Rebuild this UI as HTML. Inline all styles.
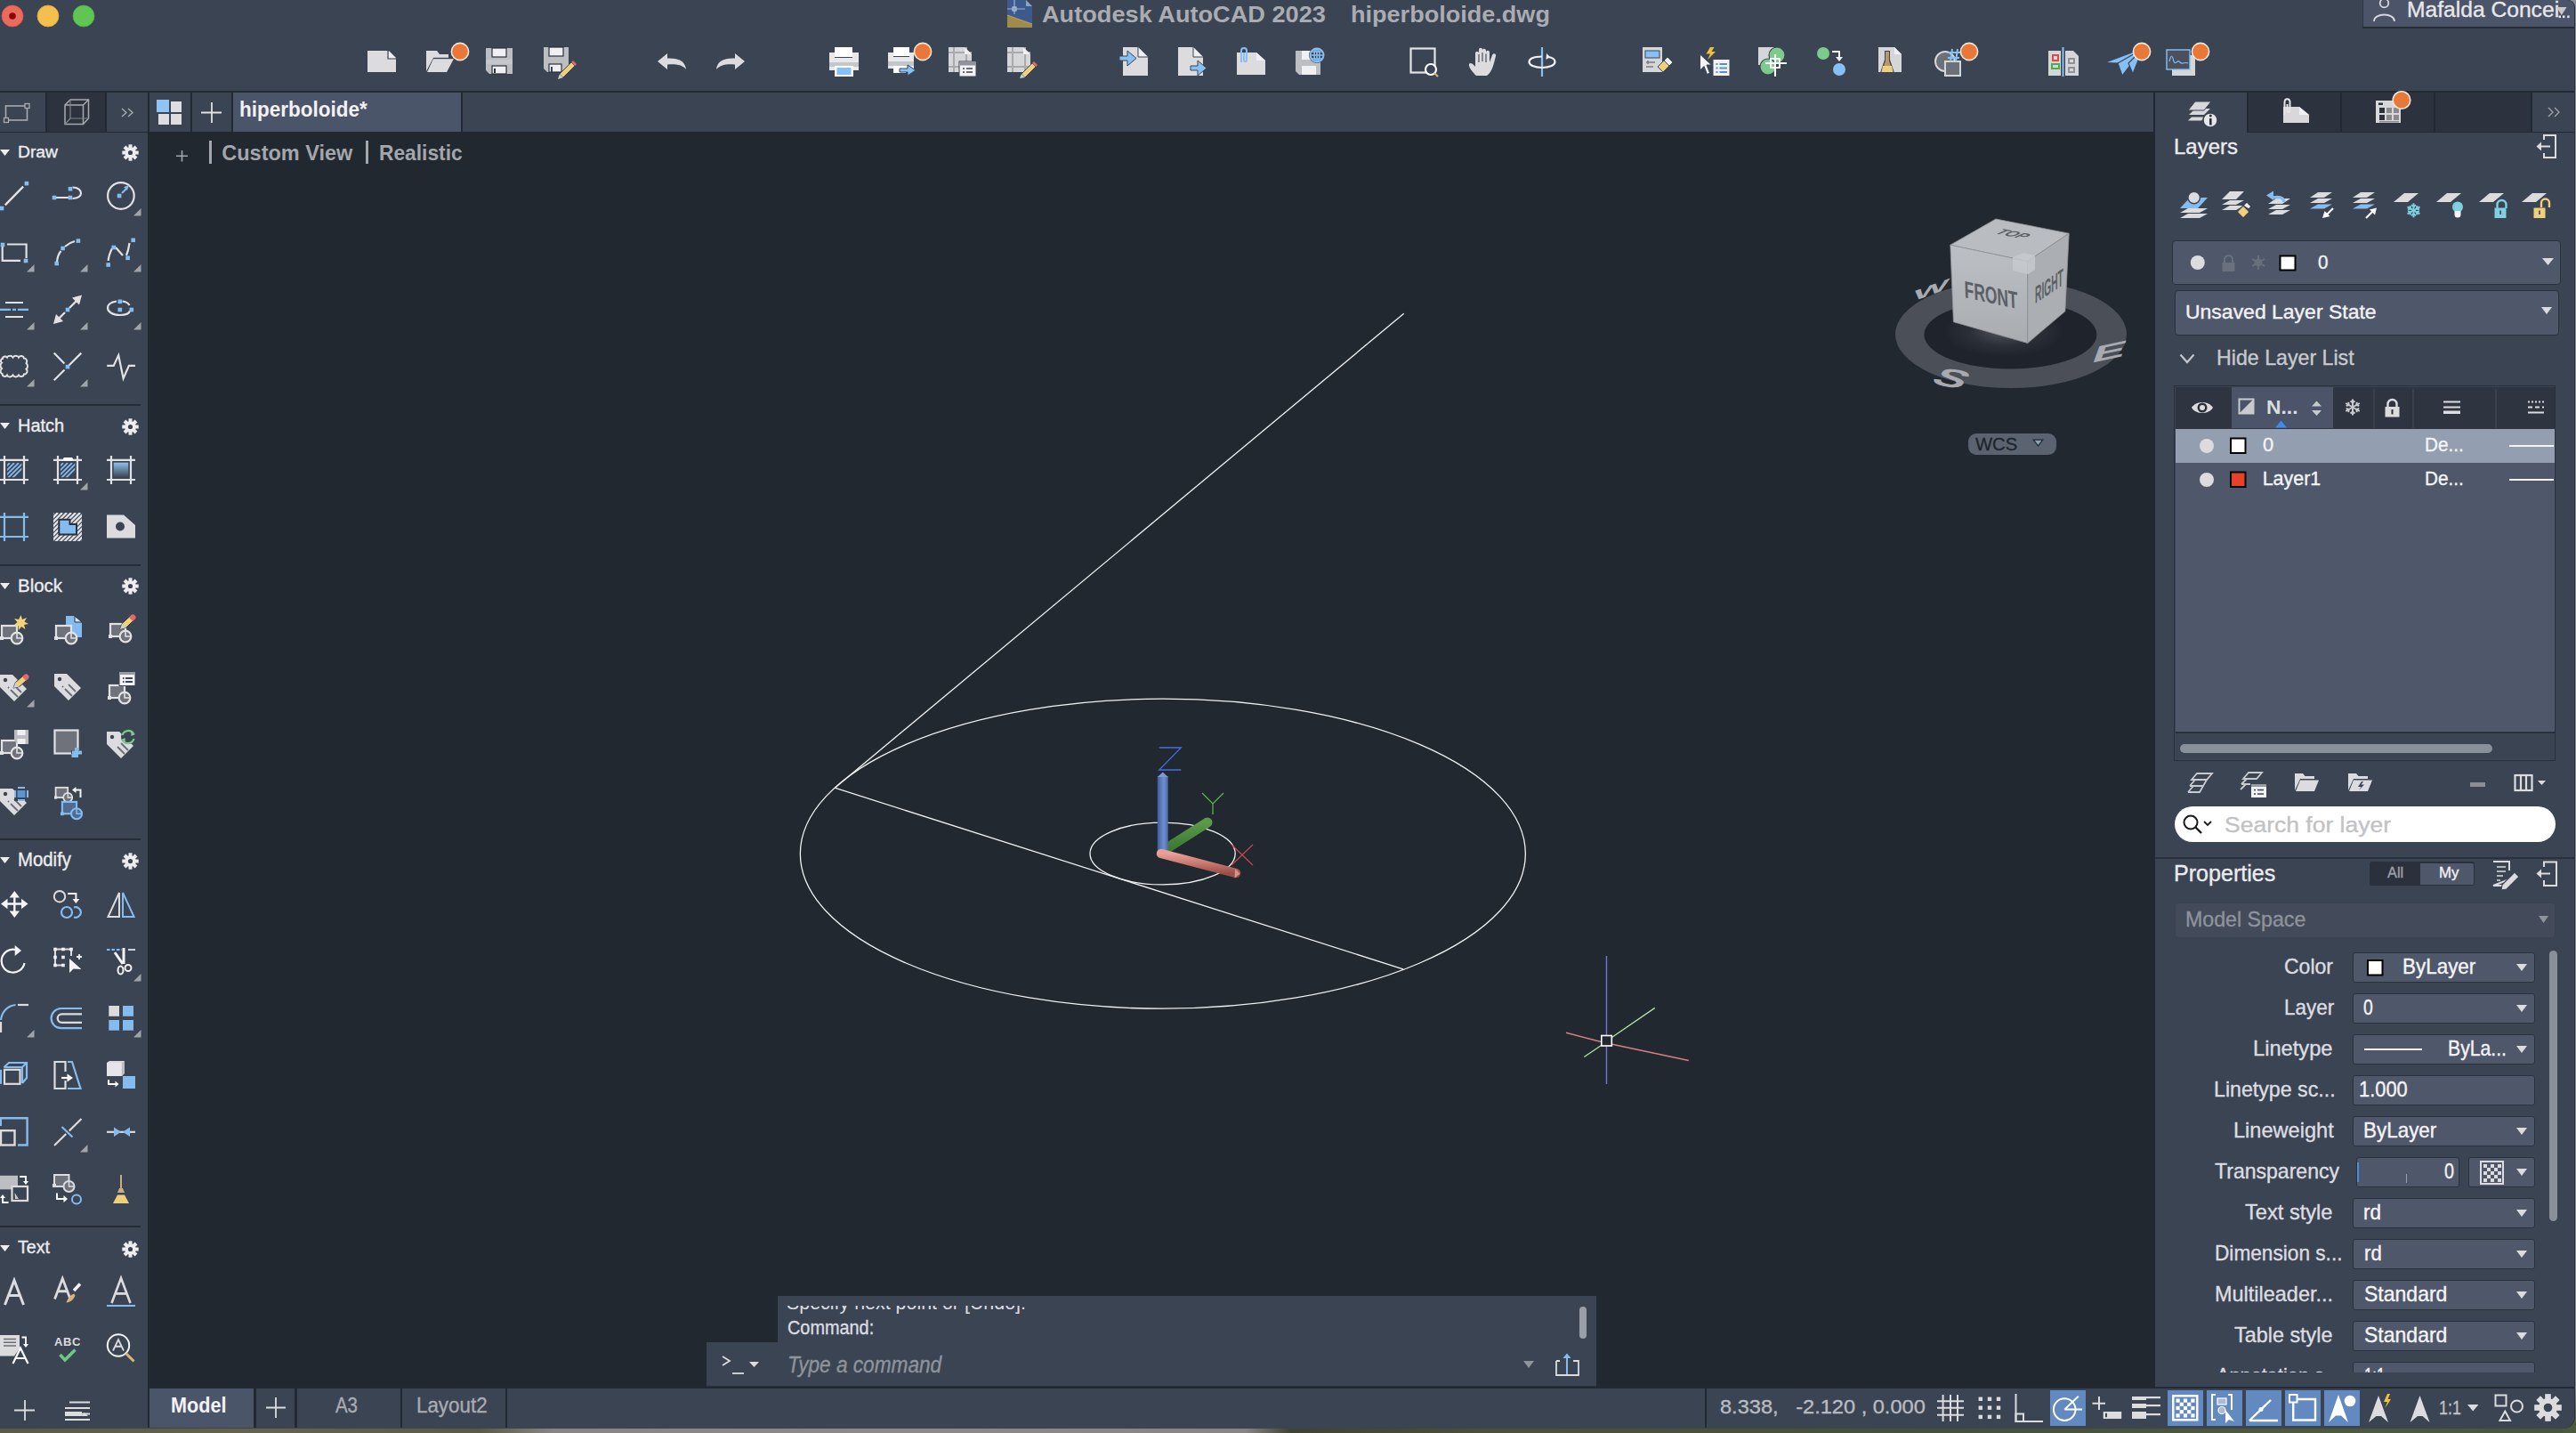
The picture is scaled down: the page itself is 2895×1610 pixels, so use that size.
<!DOCTYPE html>
<html><head><meta charset="utf-8">
<style>
*{margin:0;padding:0;box-sizing:border-box}
html,body{width:2895px;height:1610px;overflow:hidden;background:#3d4a33;font-family:"Liberation Sans",sans-serif}
.a{position:absolute}
.t{position:absolute;white-space:pre;line-height:1}
svg.a{overflow:visible}
#win{position:absolute;left:0;top:0;width:2893px;height:1605px;background:#3b4453;border-bottom-right-radius:13px;border-top-right-radius:8px;overflow:hidden;box-shadow:1px 0 0 #2a303a}
</style></head><body>
<div class="a" style="left:0;top:1598px;width:2895px;height:12px;background:linear-gradient(90deg,#5c5a44 0,#66624c 300px,#5a5a42 540px,#8a8380 620px,#8f8884 1000px,#8a8380 1400px,#3e4432 1450px,#4a5238 1700px,#44503a 2200px,#4c5a3c 2600px,#46543a 2895px)"></div>
<div class="a" style="left:2880px;top:0;width:15px;height:1610px;background:linear-gradient(180deg,#8a9099 0,#8a9099 1560px,#4a5a3a 1600px)"></div>
<div id="win">

<div class="a" style="left:0px;top:0px;width:2893px;height:102px;background:#3b4453;"></div>
<div class="a" style="left:0px;top:102px;width:2893px;height:2px;background:#232932;"></div>
<div class="a" style="left:0px;top:104px;width:2893px;height:44px;background:#3b4453;"></div>
<div class="a" style="left:0px;top:148px;width:2893px;height:1px;background:#232932;"></div>
<div class="a" style="left:166px;top:149px;width:2256px;height:1409px;background:#212830;"></div>
<div class="a" style="left:166px;top:104px;width:2px;height:45px;background:#232932;"></div>
<div class="a" style="left:2420px;top:104px;width:2px;height:1456px;background:#232932;"></div>
<div class="a" style="left:166px;top:1558px;width:2727px;height:2px;background:#232932;"></div>
<div class="a" style="left:0px;top:1560px;width:2893px;height:45px;background:#3b4453;"></div>
<svg class="a" style="left:0px;top:0px;" width="120" height="40" viewBox="0 0 120 40"><circle cx="14" cy="18" r="12" fill="#ed6a5e" stroke="#d9554a" stroke-width="0.8"/><circle cx="14" cy="18" r="3.8" fill="#7e0c06"/>
<circle cx="54" cy="18" r="12" fill="#f4bf4f" stroke="#dca53a" stroke-width="0.8"/>
<circle cx="94" cy="18" r="12" fill="#61c554" stroke="#4ea942" stroke-width="0.8"/></svg>
<svg class="a" style="left:1132px;top:0px;" width="29" height="32" viewBox="0 0 29 32"><path d="M0 0 H21 L28 7 V31 H0 Z" fill="#3e5a8c"/><path d="M0 17 L28 27 V31 H0 Z" fill="#a08a4c"/><path d="M0 17 L28 27" stroke="#b9a262" stroke-width="1"/>
<path d="M8 0 V16 M0 10 H20" stroke="#9db4d8" stroke-width="1.2" fill="none"/><rect x="6" y="8" width="4" height="4" fill="none" stroke="#c5d3ea" stroke-width="1"/>
<path d="M21 0 L28 7 H21 Z" fill="#8ea3c4"/></svg>
<div class="t" style="left:1171.0px;top:2.8px;font-size:26.09px;color:#a9acb2;font-weight:bold;transform:scaleX(1.0414);transform-origin:0 0;">Autodesk AutoCAD 2023</div>
<div class="t" style="left:1518.0px;top:2.8px;font-size:26.09px;color:#a9acb2;font-weight:bold;transform:scaleX(1.0374);transform-origin:0 0;">hiperboloide.dwg</div>
<div class="a" style="left:2655px;top:0px;width:238px;height:32px;background:#4b5468;border-bottom:2px solid #262c36;border-left:1px solid #2e3541"></div>
<svg class="a" style="left:2667px;top:0px;" width="26" height="25" viewBox="0 0 26 25"><circle cx="12.5" cy="3.5" r="4.8" fill="none" stroke="#d8d8da" stroke-width="1.8"/><path d="M1 24 C1 14 24 14 24 24" fill="none" stroke="#d8d8da" stroke-width="1.8"/></svg>
<div class="t" style="left:2705.0px;top:-0.9px;font-size:24.64px;color:#e8e8ea;-webkit-text-stroke:0.35px #e8e8ea;">Mafalda Concei</div>
<svg class="a" style="left:2872px;top:7px;" width="18" height="16" viewBox="0 0 18 16"><path d="M1 1 H12.5 L6.8 10 Z" fill="#c8c8cc"/><rect x="3.6" y="10.5" width="2.4" height="2.6" fill="#e8e8ea"/><rect x="8" y="10.5" width="2.4" height="2.6" fill="#e8e8ea"/><rect x="13.2" y="10.5" width="2.4" height="2.6" fill="#e8e8ea"/></svg>
<svg class="a" style="left:413px;top:57px;" width="33" height="25" viewBox="0 0 33 25"><path d="M0 0 H23 L32 8.5 V24 H0 Z" fill="#dcdcde"/><path d="M24 0 L32 8 H24 Z" fill="#f0f0f2"/><path d="M23 0 V9 H32" fill="none" stroke="#3b4453" stroke-width="1.2"/></svg>
<svg class="a" style="left:478px;top:47px;" width="50" height="36" viewBox="0 0 50 36"><path d="M1 10 H13 L16 14 H26 V18 H9 L1 33 Z" fill="#dcdcde"/><path d="M9 19 H32 L24 34 H2 Z" fill="#dcdcde"/><path d="M9 18.5 H32" stroke="#3b4453" stroke-width="1.4"/><circle cx="39" cy="11" r="9.6" fill="#e8773a" stroke="#f6e6d6" stroke-width="1.6"/></svg>
<svg class="a" style="left:546px;top:54px;" width="31" height="30" viewBox="0 0 31 30"><path d="M0 0 H30 V29 H4 L0 25 Z" fill="#bdbec2"/><rect x="7" y="0" width="16" height="10" fill="#f0f0f2" stroke="#2b313c" stroke-width="1.2"/><rect x="7" y="20" width="16" height="9" fill="#f0f0f2" stroke="#2b313c" stroke-width="1.2"/><rect x="9" y="23" width="2" height="5" fill="#2b313c"/><rect x="0" y="13" width="30" height="5" fill="#cfd0d3" opacity="0.5"/></svg>
<svg class="a" style="left:611px;top:53px;" width="36" height="33" viewBox="0 0 36 33"><path d="M0 0 H28 V28 H4 L0 24 Z" fill="#bdbec2"/><rect x="6" y="0" width="16" height="10" fill="#f0f0f2" stroke="#2b313c" stroke-width="1.2"/><rect x="6" y="19" width="14" height="9" fill="#f0f0f2" stroke="#2b313c" stroke-width="1.2"/><rect x="8" y="22" width="2" height="6" fill="#3b4453"/><path d="M18 30 L31 17 L35 21 L22 34 Z" fill="#f0cf7a" stroke="#3b4453" stroke-width="1"/><path d="M31 17 L33 15 L37 19 L35 21 Z" fill="#e06a6a"/><path d="M18 30 L22 34 L16 36 Z" fill="#d0d0d0"/></svg>
<svg class="a" style="left:739px;top:60px;" width="33" height="19" viewBox="0 0 33 19"><path d="M0 9 L11 0 V5.5 C24 5 31 9 32 18 C28 13 21 11.5 11 12.5 V18 Z" fill="#dcdcde"/></svg>
<svg class="a" style="left:805px;top:60px;" width="33" height="19" viewBox="0 0 33 19"><path d="M32 9 L21 0 V5.5 C8 5 1 9 0 18 C4 13 11 11.5 21 12.5 V18 Z" fill="#dcdcde"/></svg>
<svg class="a" style="left:932px;top:52px;" width="34" height="34" viewBox="0 0 34 34"><rect x="6" y="1" width="20" height="11" fill="#fff"/><path d="M0 7 H6 V13 H26 V7 H33 V27 H0 Z" fill="#e8e8ea"/><rect x="0" y="18" width="33" height="5" fill="#c5c6ca"/><rect x="6" y="22" width="21" height="12" fill="#fff"/><rect x="8.5" y="24" width="16" height="8" fill="#86c0f4"/></svg>
<svg class="a" style="left:998px;top:47px;" width="50" height="40" viewBox="0 0 50 40"><rect x="6" y="6" width="18" height="10" fill="#fff"/><path d="M0 12 H6 V17 H24 V12 H29 V30 H0 Z" fill="#e8e8ea"/><rect x="0" y="22" width="29" height="5" fill="#c5c6ca"/><rect x="6" y="27" width="14" height="8" fill="#fff"/><path d="M13 30 H22 V26 L31 32 L22 38 V34 H13 Z" fill="#86c0f4" stroke="#3b4453" stroke-width="1"/><circle cx="39" cy="11" r="9.6" fill="#e8773a" stroke="#f6e6d6" stroke-width="1.6"/></svg>
<svg class="a" style="left:1066px;top:53px;" width="31" height="33" viewBox="0 0 31 33"><path d="M0 0 H18 L26 8 V28 H0 Z" fill="#d5d6d8"/><path d="M0 6 H26 M0 22 H26 M6 0 V28 M20 0 V28" stroke="#a9aaae" stroke-width="2"/><path d="M18 0 L26 8 H18 Z" fill="#f0f0f2"/><rect x="12" y="16" width="19" height="17" fill="#f2f2f4" stroke="#3b4453" stroke-width="1"/><rect x="12.5" y="16.5" width="18" height="4" fill="#909398"/><path d="M16 24 H18 M20 24 H27 M16 28 H18 M20 28 H27" stroke="#3b4453" stroke-width="1.6"/></svg>
<svg class="a" style="left:1132px;top:53px;" width="33" height="34" viewBox="0 0 33 34"><path d="M0 0 H18 L26 8 V28 H0 Z" fill="#d5d6d8"/><path d="M0 6 H26 M0 22 H26 M6 0 V28 M20 0 V28" stroke="#a9aaae" stroke-width="2"/><path d="M18 0 L26 8 H18 Z" fill="#f0f0f2"/><path d="M16 30 L28 18 L32 22 L20 34 Z" fill="#f0cf7a" stroke="#3b4453" stroke-width="1"/><path d="M28 18 L30 16 L34 20 L32 22 Z" fill="#e06a6a"/><path d="M16 30 L20 34 L14 35 Z" fill="#d0d0d0"/></svg>
<svg class="a" style="left:1258px;top:53px;" width="34" height="33" viewBox="0 0 34 33"><path d="M4 0 H21 L32 11 V32 H4 Z" fill="#dcdcde"/><path d="M21 0 L32 11 H21 Z" fill="#f0f0f2"/><path d="M21 0 V11 H32" fill="none" stroke="#3b4453" stroke-width="1"/><path d="M0 10 H9 V4 L19 12.5 L9 21 V15 H0 Z" fill="#86c0f4" stroke="#3b4453" stroke-width="1"/></svg>
<svg class="a" style="left:1324px;top:53px;" width="35" height="33" viewBox="0 0 35 33"><path d="M0 0 H17 L28 11 V32 H0 Z" fill="#dcdcde"/><path d="M17 0 L28 11 H17 Z" fill="#f0f0f2"/><path d="M17 0 V11 H28" fill="none" stroke="#3b4453" stroke-width="1"/><path d="M14 21 H22 V15 L32 23.5 L22 32 V26 H14 Z" fill="#86c0f4" stroke="#3b4453" stroke-width="1"/></svg>
<svg class="a" style="left:1390px;top:53px;" width="34" height="33" viewBox="0 0 34 33"><path d="M0 6 H22 L32 15 V31 H0 Z" fill="#dcdcde"/><path d="M22 6 L32 15 H22 Z" fill="#f0f0f2"/><path d="M5 17 V4 C5 0 11 0 11 4 V14 C11 17 8 17 8 14 V6" fill="none" stroke="#86c0f4" stroke-width="2"/></svg>
<svg class="a" style="left:1456px;top:53px;" width="34" height="33" viewBox="0 0 34 33"><path d="M0 4 H28 V31 H4 L0 27 Z" fill="#bdbec2"/><rect x="7" y="4" width="10" height="10" fill="#f0f0f2"/><rect x="7" y="21" width="16" height="10" fill="#f0f0f2"/><circle cx="24" cy="9" r="9" fill="#3b4453"/><circle cx="24" cy="9" r="7.5" fill="none" stroke="#86c0f4" stroke-width="2"/><path d="M16.5 9 H31.5 M24 1.5 V16.5 M18 5 H30 M18 13 H30" stroke="#86c0f4" stroke-width="1.5"/><ellipse cx="24" cy="9" rx="3" ry="7.5" fill="none" stroke="#86c0f4" stroke-width="1.5"/></svg>
<svg class="a" style="left:1584px;top:53px;" width="34" height="33" viewBox="0 0 34 33"><rect x="1.5" y="1.5" width="27" height="27" fill="none" stroke="#e4e4e6" stroke-width="2.2"/><circle cx="24" cy="25" r="6" fill="#3b4453" stroke="#fff" stroke-width="2.2"/><path d="M28 29 L32 33" stroke="#d9b36a" stroke-width="2.2"/></svg>
<svg class="a" style="left:1650px;top:53px;" width="34" height="33" viewBox="0 0 34 33"><path d="M9 32 C5 28 0 22 1 19 C2 17 5 18 8 22 V7 C8 4 12 4 12 7 V3 C12 0 16 0 16 3 V15 V3.5 C16 1 20 1 20 4 V15 V6 C20 3 24 3 24 6 V17 L27 9 C28 6 32 7 31 10 C29 18 27 28 21 32 Z" fill="#dcdcde"/><path d="M12 8 V17 M16 6 V16 M20 7.5 V17" stroke="#3b4453" stroke-width="1.1"/></svg>
<svg class="a" style="left:1717px;top:53px;" width="32" height="33" viewBox="0 0 32 33"><path d="M16 0 V33" stroke="#86c0f4" stroke-width="2.2"/><path d="M16 10.5 C6 10.5 1.5 13 1.5 16.5 C1.5 20 7 23 16 23 C25 23 30.5 20 30.5 16.5 C30.5 13.5 27 11.5 22.5 11" fill="none" stroke="#f2f2f4" stroke-width="2.2"/><path d="M21 7 L25 11 L20.5 14 Z" fill="#f2f2f4"/><path d="M16 12 V21" stroke="#86c0f4" stroke-width="2.2"/></svg>
<svg class="a" style="left:1846px;top:53px;" width="34" height="33" viewBox="0 0 34 33"><path d="M0 0 H22 V28 H0 Z" fill="#d5d6d8"/><rect x="3" y="4" width="16" height="8" fill="#86c0f4" stroke="#3b4453" stroke-width="1"/><path d="M4 17 H14 M4 22 H12 M6 15 V19" stroke="#7a7c82" stroke-width="1.6"/><path d="M17 22 L24 15 L30 21 L23 28 Z" fill="#f0cf7a" stroke="#3b4453" stroke-width="1"/><path d="M24 15 L28 11 L34 17 L30 21 Z" fill="#f2f2f4" stroke="#3b4453" stroke-width="1"/></svg>
<svg class="a" style="left:1909px;top:52px;" width="36" height="35" viewBox="0 0 36 35"><path d="M13 1 L8.5 8.5 H13 L10 15 L19 6 H14.5 L17.5 1 Z" fill="#f0c040"/><path d="M1.5 9 L14.5 21 H9 L12.5 30 L9.5 31.5 L6 22.5 L1.5 27 Z" fill="#f4f4f6" stroke="#3b4453" stroke-width="1"/><rect x="16.5" y="15" width="18" height="18" fill="#f2f2f4"/><path d="M19.5 20 H21.5 M23.5 20 H32 M19.5 24.5 H21.5 M23.5 24.5 H32 M19.5 29 H21.5 M23.5 29 H32" stroke="#5a90c8" stroke-width="1.8"/></svg>
<svg class="a" style="left:1976px;top:53px;" width="34" height="33" viewBox="0 0 34 33"><rect x="0" y="0" width="18" height="20" fill="#d5d6d8"/><circle cx="21" cy="9" r="9" fill="#7ccb8c" stroke="#3b4453" stroke-width="1.2"/><circle cx="11" cy="22" r="9" fill="#7ccb8c" stroke="#3b4453" stroke-width="1.2"/><rect x="14" y="13" width="10" height="10" fill="none" stroke="#fff" stroke-width="2"/><path d="M19 8 V33 M8 18 H32" stroke="#fff" stroke-width="2"/></svg>
<svg class="a" style="left:2042px;top:53px;" width="34" height="33" viewBox="0 0 34 33"><circle cx="7" cy="7" r="7" fill="#7ccb8c"/><circle cx="25" cy="25" r="7" fill="#86c0f4"/><path d="M17 5 H25 V12" fill="none" stroke="#f2f2f4" stroke-width="2"/><path d="M21 11 H29 L25 16 Z" fill="#f2f2f4"/></svg>
<svg class="a" style="left:2111px;top:53px;" width="28" height="33" viewBox="0 0 28 33"><path d="M0 0 H18 L26 8 V28 H0 Z" fill="#d5d6d8"/><path d="M18 0 L26 8 H18 Z" fill="#f0f0f2"/><path d="M7 4 V14 L2 29 H18 L13 14 V4 Z" fill="#3b4453"/><path d="M8 5 V15 L4 28 H16 L12 15 V5 Z" fill="#b89a68"/><path d="M5 21 H15 L16.5 28 H3.5 Z" fill="#f0cf7a"/></svg>
<svg class="a" style="left:2174px;top:47px;" width="50" height="40" viewBox="0 0 50 40"><circle cx="12" cy="22" r="11" fill="#6c7078" stroke="#d5d6d8" stroke-width="2"/><rect x="12" y="22" width="17" height="16" fill="#6c7078" stroke="#d5d6d8" stroke-width="2"/><path d="M20 8 L18 22 M26 8 L24 22 M16 12 H29 M15 18 H28" stroke="#86c0f4" stroke-width="2"/><circle cx="39" cy="11" r="9.6" fill="#e8773a" stroke="#f6e6d6" stroke-width="1.6"/></svg>
<svg class="a" style="left:2302px;top:53px;" width="34" height="33" viewBox="0 0 34 33"><rect x="0" y="4" width="14" height="28" fill="#d5d6d8"/><path d="M19 4 H28 L34 10 V32 H19 Z" fill="#d5d6d8"/><path d="M16.5 0 V33" stroke="#86c0f4" stroke-width="2"/><rect x="5" y="9" width="6" height="6" fill="none" stroke="#e04848" stroke-width="2"/><rect x="4" y="19" width="8" height="5" fill="none" stroke="#48b048" stroke-width="2"/><rect x="23" y="13" width="6" height="5" fill="none" stroke="#8a8c90" stroke-width="1.8"/><rect x="23" y="23" width="6" height="5" fill="none" stroke="#8a8c90" stroke-width="1.8"/></svg>
<svg class="a" style="left:2368px;top:47px;" width="50" height="40" viewBox="0 0 50 40"><path d="M0 23 L40 8 L24 24 Z" fill="#86c0f4"/><path d="M12 24 L40 8 L17 38 Z" fill="#86c0f4" stroke="#3b4453" stroke-width="1.2"/><path d="M24 24 L40 8 L29 36 Z" fill="#86c0f4" stroke="#3b4453" stroke-width="1.2"/><circle cx="39" cy="11" r="9.6" fill="#e8773a" stroke="#f6e6d6" stroke-width="1.6"/></svg>
<svg class="a" style="left:2434px;top:47px;" width="50" height="40" viewBox="0 0 50 40"><rect x="7" y="15" width="26" height="23" fill="#d5d6d8"/><rect x="1" y="9" width="26" height="22" fill="#4a5060" stroke="#86c0f4" stroke-width="1.4"/><path d="M4 22 C6 14 7 14 9 22 C11 27 13 19 16 23 C19 26 22 22 25 24" fill="none" stroke="#86c0f4" stroke-width="1.2"/><circle cx="39" cy="11" r="9.6" fill="#e8773a" stroke="#f6e6d6" stroke-width="1.6"/></svg>
<div class="a" style="left:51px;top:104px;width:2px;height:44px;background:#232932;"></div>
<div class="a" style="left:53px;top:104px;width:65px;height:44px;background:#2c333e;"></div>
<div class="a" style="left:118px;top:104px;width:2px;height:44px;background:#232932;"></div>
<div class="a" style="left:51px;top:148px;width:115px;height:1px;background:#232932;"></div>
<div class="a" style="left:214px;top:104px;width:2px;height:44px;background:#232932;"></div>
<div class="a" style="left:260px;top:104px;width:2px;height:44px;background:#232932;"></div>
<div class="a" style="left:262px;top:104px;width:256px;height:44px;background:#4b556a;"></div>
<div class="a" style="left:518px;top:104px;width:2px;height:44px;background:#232932;"></div>
<svg class="a" style="left:4px;top:116px;" width="30" height="22" viewBox="0 0 30 22"><rect x="2.5" y="3" width="24" height="16" fill="none" stroke="#a8aaae" stroke-width="1.6"/><rect x="0.5" y="16.5" width="5" height="5" fill="#3b4453" stroke="#a8aaae" stroke-width="1.3"/><rect x="24" y="0.5" width="5" height="5" fill="#3b4453" stroke="#a8aaae" stroke-width="1.3"/></svg>
<svg class="a" style="left:72px;top:111px;" width="29" height="30" viewBox="0 0 29 30"><path d="M1 7 L7 1 H27.5 V22 L21.5 28.5 H1 Z" fill="none" stroke="#a8aaae" stroke-width="1.5"/><path d="M1 7 H21.5 V28.5 M21.5 7 L27.5 1" fill="none" stroke="#a8aaae" stroke-width="1.5"/><path d="M7 1 V22 H27.5 M7 22 L1 28.5" fill="none" stroke="#80838a" stroke-width="1.2"/></svg>
<svg class="a" style="left:136px;top:121px;" width="15" height="11" viewBox="0 0 15 11"><path d="M1 1 L6 5.5 L1 10 M8 1 L13 5.5 L8 10" fill="none" stroke="#a8aaae" stroke-width="1.4"/></svg>
<svg class="a" style="left:176px;top:112px;" width="28" height="28" viewBox="0 0 28 28"><rect x="0" y="0" width="14" height="14" fill="#8fc3f2"/><rect x="16" y="2" width="12" height="12" fill="#dedde0"/><rect x="2" y="16" width="12" height="12" fill="#dedde0"/><rect x="16" y="16" width="12" height="12" fill="#dedde0"/></svg>
<svg class="a" style="left:226px;top:115px;" width="24" height="23" viewBox="0 0 24 23"><path d="M12 0 V23 M0 11.5 H23" stroke="#e2e2e4" stroke-width="1.8"/></svg>
<div class="t" style="left:268.6px;top:111.1px;font-size:24.64px;color:#f2f2f4;font-weight:bold;transform:scaleX(0.9129);transform-origin:0 0;">hiperboloide*</div>
<div class="a" style="left:2527px;top:104px;width:366px;height:44px;background:#2c333e;"></div>
<div class="a" style="left:2525px;top:104px;width:2px;height:44px;background:#232932;"></div>
<div class="a" style="left:2630px;top:104px;width:2px;height:44px;background:#232932;"></div>
<div class="a" style="left:2735px;top:104px;width:2px;height:44px;background:#232932;"></div>
<div class="a" style="left:2844px;top:104px;width:2px;height:44px;background:#232932;"></div>
<div class="a" style="left:2846px;top:104px;width:47px;height:44px;background:#3b4453;"></div>
<div class="a" style="left:2527px;top:148px;width:366px;height:1px;background:#232932;"></div>
<div class="a" style="left:2422px;top:148px;width:103px;height:1px;background:#3b4453;"></div>
<svg class="a" style="left:2458px;top:112px;" width="36" height="32" viewBox="0 0 36 32"><path d="M1 23.5 L5 19.5 H20 L16 23.5 Z" fill="#d8d8da"/><path d="M1 17.5 L9 9.5 H27 L19 17.5 Z" fill="#d8d8da" stroke="#3b4453" stroke-width="1"/><path d="M1 12 L9 2 H27 L19 12 Z" fill="#d8d8da" stroke="#3b4453" stroke-width="1"/><circle cx="26" cy="23" r="8" fill="#e8e8ea" stroke="#3b4453" stroke-width="1.5"/><rect x="25" y="21" width="2.6" height="7.5" fill="#2b313c"/><circle cx="26.3" cy="18" r="1.5" fill="#2b313c"/></svg>
<svg class="a" style="left:2564px;top:110px;" width="32" height="29" viewBox="0 0 32 29"><path d="M2 10 H20 L31 19 V28 H2 Z" fill="#d8d8da"/><path d="M20 10 L31 19 H20 Z" fill="#efeff1"/><path d="M3.5 19 V5 C3.5 0 9.5 0 9.5 5 V14 C9.5 17 6.5 17 6.5 14 V7" fill="none" stroke="#e4e4e6" stroke-width="2"/></svg>
<svg class="a" style="left:2670px;top:103px;" width="40" height="37" viewBox="0 0 40 37"><rect x="0" y="10" width="28" height="25" fill="#d8d8da"/><rect x="3" y="12.5" width="5" height="2.5" fill="#2c333e"/><rect x="4" y="18" width="6" height="6" fill="#2c333e"/><rect x="12" y="18" width="6" height="6" fill="#888a8e"/><rect x="20" y="18" width="6" height="6" fill="#888a8e"/><rect x="4" y="26" width="6" height="6" fill="#2c333e"/><rect x="12" y="26" width="6" height="6" fill="#888a8e"/><rect x="20" y="26" width="6" height="6" fill="#888a8e"/><rect x="4" y="33" width="22" height="1.5" fill="#888a8e"/><circle cx="29" cy="9.5" r="9.8" fill="#e8773a" stroke="#f6e6d6" stroke-width="1.6"/></svg>
<svg class="a" style="left:2863px;top:120px;" width="16" height="13" viewBox="0 0 16 13"><path d="M1 1 L6 6 L1 11 M8 1 L13 6 L8 11" fill="none" stroke="#9fa2a8" stroke-width="1.4"/></svg>
<svg class="a" style="left:0px;top:167.7px;" width="12" height="9" viewBox="0 0 12 9"><path d="M0 0 H11 L5.5 7 Z" fill="#eeeef0"/></svg>
<div class="t" style="left:20.0px;top:160.7px;font-size:18.99px;color:#ededef;-webkit-text-stroke:0.35px #ededef;transform:scaleX(1.0158);transform-origin:0 0;">Draw</div>
<svg class="a" style="left:137px;top:162.2px;" width="19" height="19" viewBox="0 0 19 19"><g transform="translate(9.5,9.5)"><circle r="6.2" fill="#ededef"/><rect x="-2" y="-9.2" width="4" height="5" fill="#ededef" transform="rotate(0)"/><rect x="-2" y="-9.2" width="4" height="5" fill="#ededef" transform="rotate(45)"/><rect x="-2" y="-9.2" width="4" height="5" fill="#ededef" transform="rotate(90)"/><rect x="-2" y="-9.2" width="4" height="5" fill="#ededef" transform="rotate(135)"/><rect x="-2" y="-9.2" width="4" height="5" fill="#ededef" transform="rotate(180)"/><rect x="-2" y="-9.2" width="4" height="5" fill="#ededef" transform="rotate(225)"/><rect x="-2" y="-9.2" width="4" height="5" fill="#ededef" transform="rotate(270)"/><rect x="-2" y="-9.2" width="4" height="5" fill="#ededef" transform="rotate(315)"/><circle r="2.6" fill="#3b4453"/></g></svg>
<svg class="a" style="left:0px;top:475.2px;" width="12" height="9" viewBox="0 0 12 9"><path d="M0 0 H11 L5.5 7 Z" fill="#eeeef0"/></svg>
<div class="t" style="left:20.0px;top:468.0px;font-size:20.00px;color:#ededef;-webkit-text-stroke:0.35px #ededef;">Hatch</div>
<svg class="a" style="left:137px;top:469.7px;" width="19" height="19" viewBox="0 0 19 19"><g transform="translate(9.5,9.5)"><circle r="6.2" fill="#ededef"/><rect x="-2" y="-9.2" width="4" height="5" fill="#ededef" transform="rotate(0)"/><rect x="-2" y="-9.2" width="4" height="5" fill="#ededef" transform="rotate(45)"/><rect x="-2" y="-9.2" width="4" height="5" fill="#ededef" transform="rotate(90)"/><rect x="-2" y="-9.2" width="4" height="5" fill="#ededef" transform="rotate(135)"/><rect x="-2" y="-9.2" width="4" height="5" fill="#ededef" transform="rotate(180)"/><rect x="-2" y="-9.2" width="4" height="5" fill="#ededef" transform="rotate(225)"/><rect x="-2" y="-9.2" width="4" height="5" fill="#ededef" transform="rotate(270)"/><rect x="-2" y="-9.2" width="4" height="5" fill="#ededef" transform="rotate(315)"/><circle r="2.6" fill="#3b4453"/></g></svg>
<svg class="a" style="left:0px;top:654.8px;" width="12" height="9" viewBox="0 0 12 9"><path d="M0 0 H11 L5.5 7 Z" fill="#eeeef0"/></svg>
<div class="t" style="left:20.0px;top:647.4px;font-size:21.01px;color:#ededef;-webkit-text-stroke:0.35px #ededef;transform:scaleX(0.9730);transform-origin:0 0;">Block</div>
<svg class="a" style="left:137px;top:649.3px;" width="19" height="19" viewBox="0 0 19 19"><g transform="translate(9.5,9.5)"><circle r="6.2" fill="#ededef"/><rect x="-2" y="-9.2" width="4" height="5" fill="#ededef" transform="rotate(0)"/><rect x="-2" y="-9.2" width="4" height="5" fill="#ededef" transform="rotate(45)"/><rect x="-2" y="-9.2" width="4" height="5" fill="#ededef" transform="rotate(90)"/><rect x="-2" y="-9.2" width="4" height="5" fill="#ededef" transform="rotate(135)"/><rect x="-2" y="-9.2" width="4" height="5" fill="#ededef" transform="rotate(180)"/><rect x="-2" y="-9.2" width="4" height="5" fill="#ededef" transform="rotate(225)"/><rect x="-2" y="-9.2" width="4" height="5" fill="#ededef" transform="rotate(270)"/><rect x="-2" y="-9.2" width="4" height="5" fill="#ededef" transform="rotate(315)"/><circle r="2.6" fill="#3b4453"/></g></svg>
<svg class="a" style="left:0px;top:963px;" width="12" height="9" viewBox="0 0 12 9"><path d="M0 0 H11 L5.5 7 Z" fill="#eeeef0"/></svg>
<div class="t" style="left:20.0px;top:955.6px;font-size:21.30px;color:#ededef;-webkit-text-stroke:0.35px #ededef;transform:scaleX(0.9563);transform-origin:0 0;">Modify</div>
<svg class="a" style="left:137px;top:957.5px;" width="19" height="19" viewBox="0 0 19 19"><g transform="translate(9.5,9.5)"><circle r="6.2" fill="#ededef"/><rect x="-2" y="-9.2" width="4" height="5" fill="#ededef" transform="rotate(0)"/><rect x="-2" y="-9.2" width="4" height="5" fill="#ededef" transform="rotate(45)"/><rect x="-2" y="-9.2" width="4" height="5" fill="#ededef" transform="rotate(90)"/><rect x="-2" y="-9.2" width="4" height="5" fill="#ededef" transform="rotate(135)"/><rect x="-2" y="-9.2" width="4" height="5" fill="#ededef" transform="rotate(180)"/><rect x="-2" y="-9.2" width="4" height="5" fill="#ededef" transform="rotate(225)"/><rect x="-2" y="-9.2" width="4" height="5" fill="#ededef" transform="rotate(270)"/><rect x="-2" y="-9.2" width="4" height="5" fill="#ededef" transform="rotate(315)"/><circle r="2.6" fill="#3b4453"/></g></svg>
<svg class="a" style="left:0px;top:1399px;" width="12" height="9" viewBox="0 0 12 9"><path d="M0 0 H11 L5.5 7 Z" fill="#eeeef0"/></svg>
<div class="t" style="left:20.0px;top:1391.9px;font-size:19.57px;color:#ededef;-webkit-text-stroke:0.35px #ededef;">Text</div>
<svg class="a" style="left:137px;top:1393.5px;" width="19" height="19" viewBox="0 0 19 19"><g transform="translate(9.5,9.5)"><circle r="6.2" fill="#ededef"/><rect x="-2" y="-9.2" width="4" height="5" fill="#ededef" transform="rotate(0)"/><rect x="-2" y="-9.2" width="4" height="5" fill="#ededef" transform="rotate(45)"/><rect x="-2" y="-9.2" width="4" height="5" fill="#ededef" transform="rotate(90)"/><rect x="-2" y="-9.2" width="4" height="5" fill="#ededef" transform="rotate(135)"/><rect x="-2" y="-9.2" width="4" height="5" fill="#ededef" transform="rotate(180)"/><rect x="-2" y="-9.2" width="4" height="5" fill="#ededef" transform="rotate(225)"/><rect x="-2" y="-9.2" width="4" height="5" fill="#ededef" transform="rotate(270)"/><rect x="-2" y="-9.2" width="4" height="5" fill="#ededef" transform="rotate(315)"/><circle r="2.6" fill="#3b4453"/></g></svg>
<div class="a" style="left:0px;top:454px;width:158px;height:2px;background:#262c36;"></div>
<div class="a" style="left:0px;top:634px;width:158px;height:2px;background:#262c36;"></div>
<div class="a" style="left:0px;top:942px;width:158px;height:2px;background:#262c36;"></div>
<div class="a" style="left:0px;top:1377px;width:158px;height:2px;background:#262c36;"></div>
<svg class="a" style="left:0px;top:200px;" width="40" height="40" viewBox="0 0 40 40"><path d="M5.8 30.3 L26.1 9.6" stroke="#e2e2e4" stroke-width="2.4"/><rect x="-0.3" y="31.7" width="4.6" height="4.6" fill="#84bcf0"/><rect x="27.6" y="3.8" width="4.6" height="4.6" fill="#84bcf0"/></svg>
<svg class="a" style="left:58px;top:205px;" width="40" height="30" viewBox="0 0 40 30"><path d="M5 17 H21 M23.5 5.5 C30 5.5 33 9 33 12 C33 15 30 18 23.5 18" fill="none" stroke="#e2e2e4" stroke-width="2.2"/><rect x="0.7" y="14.7" width="4.6" height="4.6" fill="#84bcf0"/><rect x="18.7" y="14.7" width="4.6" height="4.6" fill="#84bcf0"/><rect x="18.7" y="4.9" width="4.6" height="4.6" fill="#84bcf0"/></svg>
<svg class="a" style="left:118px;top:202px;" width="40" height="40" viewBox="0 0 40 40"><circle cx="17.9" cy="18" r="14.8" fill="none" stroke="#e2e2e4" stroke-width="2.2"/><rect x="13.8" y="15.7" width="4.6" height="4.6" fill="#84bcf0"/><path d="M19 15 L24.5 9.5" stroke="#84bcf0" stroke-width="2.2"/><path d="M21 8 L27 6 L25 12 Z" fill="#84bcf0"/></svg>
<svg class="a" style="left:150px;top:234px;" width="9" height="9" viewBox="0 0 9 9"><path d="M8.5 0 V8.5 H0 Z" fill="#a0a3a8"/></svg>
<svg class="a" style="left:0px;top:268px;" width="40" height="32" viewBox="0 0 40 32"><path d="M2.7 9 V24.9 H23 M8 6.5 H29.6 V22" fill="none" stroke="#e2e2e4" stroke-width="2.2"/><rect x="0.7" y="4.7" width="4.6" height="4.6" fill="#84bcf0"/><rect x="26.7" y="22.7" width="4.6" height="4.6" fill="#84bcf0"/></svg>
<svg class="a" style="left:58px;top:265px;" width="40" height="36" viewBox="0 0 40 36"><path d="M6 29 C6.5 24 8 20 10.5 17 M15 12 C18 9.5 22 7 26 6" fill="none" stroke="#e2e2e4" stroke-width="2.2"/><rect x="3.4" y="28.7" width="4.6" height="4.6" fill="#84bcf0"/><rect x="10.3" y="11.7" width="4.6" height="4.6" fill="#84bcf0"/><rect x="27.6" y="3.3" width="4.6" height="4.6" fill="#84bcf0"/></svg>
<svg class="a" style="left:118px;top:265px;" width="40" height="36" viewBox="0 0 40 36"><path d="M3.7 28 C4 23 6 18 8 14 M12 13 L20 22 M24 22 C26 17 27 12 27.5 8" fill="none" stroke="#e2e2e4" stroke-width="2.2"/><rect x="1.4" y="30.2" width="4.6" height="4.6" fill="#84bcf0"/><rect x="7.5" y="10.7" width="4.6" height="4.6" fill="#84bcf0"/><rect x="23.3" y="22.5" width="4.6" height="4.6" fill="#84bcf0"/><rect x="29.4" y="2.5" width="4.6" height="4.6" fill="#84bcf0"/></svg>
<svg class="a" style="left:30px;top:297px;" width="9" height="9" viewBox="0 0 9 9"><path d="M8.5 0 V8.5 H0 Z" fill="#a0a3a8"/></svg>
<svg class="a" style="left:90px;top:297px;" width="9" height="9" viewBox="0 0 9 9"><path d="M8.5 0 V8.5 H0 Z" fill="#a0a3a8"/></svg>
<svg class="a" style="left:150px;top:297px;" width="9" height="9" viewBox="0 0 9 9"><path d="M8.5 0 V8.5 H0 Z" fill="#a0a3a8"/></svg>
<svg class="a" style="left:0px;top:334px;" width="40" height="28" viewBox="0 0 40 28"><path d="M6 6 H26 M6 22 H26" stroke="#e2e2e4" stroke-width="2.2"/><path d="M0 13.8 H12 M14 13.8 H18 M20 13.8 H32" stroke="#84bcf0" stroke-width="2.2"/></svg>
<svg class="a" style="left:58px;top:329px;" width="40" height="38" viewBox="0 0 40 38"><path d="M8 29 L15 22 M20 17 L29 8" stroke="#e2e2e4" stroke-width="2.4"/><path d="M2 35 L5 24 L13 32 Z" fill="#e2e2e4"/><path d="M34 2.5 L31 13.5 L23 5.5 Z" fill="#e2e2e4"/><rect x="15.7" y="16.7" width="4.6" height="4.6" fill="#84bcf0"/></svg>
<svg class="a" style="left:118px;top:333px;" width="40" height="30" viewBox="0 0 40 30"><path d="M13 5.5 C6 6.5 3 9 3 13 C3 17 8 21 16.8 21 C24 21 27.5 18.5 28 16 M19.5 5.5 C24 6 26.5 8 27.5 10" fill="none" stroke="#e2e2e4" stroke-width="2.2"/><rect x="14.5" y="3.5" width="4.6" height="4.6" fill="#84bcf0"/><rect x="14.5" y="12.7" width="4.6" height="4.6" fill="#84bcf0"/><rect x="27.5" y="12.7" width="4.6" height="4.6" fill="#84bcf0"/></svg>
<svg class="a" style="left:30px;top:362px;" width="9" height="9" viewBox="0 0 9 9"><path d="M8.5 0 V8.5 H0 Z" fill="#a0a3a8"/></svg>
<svg class="a" style="left:90px;top:362px;" width="9" height="9" viewBox="0 0 9 9"><path d="M8.5 0 V8.5 H0 Z" fill="#a0a3a8"/></svg>
<svg class="a" style="left:150px;top:362px;" width="9" height="9" viewBox="0 0 9 9"><path d="M8.5 0 V8.5 H0 Z" fill="#a0a3a8"/></svg>
<svg class="a" style="left:0px;top:398px;" width="36" height="28" viewBox="0 0 36 28"><path d="M3 5 C3 2 7 2 8 3.5 C9 1 13 1 14.5 3.5 C16 1 20 1 21 3.5 C22.5 1 26.5 1.5 27 4.5 C30 4.5 31 8 29.5 10 C31.5 12 31.5 15 29.5 16.5 C31.5 18.5 30.5 22.5 27 22.5 C26.5 25.5 22.5 26 21 23.5 C19.5 26 16 26 14.5 23.5 C13 26 9 26 8 23.5 C6.5 26 2.5 25 2.5 22 C0 21 0 17.5 2 16 C0 14 0 11 2 9.5 C0 8 1 5 3 5 Z" fill="none" stroke="#e2e2e4" stroke-width="2"/></svg>
<svg class="a" style="left:58px;top:394px;" width="40" height="36" viewBox="0 0 40 36"><path d="M2.7 33.2 L14.5 21.5 M19.5 16.5 L33.3 2.6 M2.7 2.6 L14.4 14.4" stroke="#e2e2e4" stroke-width="2.2"/><rect x="15.7" y="15.8" width="4.6" height="4.6" fill="#84bcf0"/></svg>
<svg class="a" style="left:118px;top:396px;" width="40" height="32" viewBox="0 0 40 32"><path d="M2.2 14.9 H9.7 L15.2 3.1 L20.6 29.1 L26.9 14.9 H34" fill="none" stroke="#e2e2e4" stroke-width="2.2"/></svg>
<svg class="a" style="left:30px;top:426px;" width="9" height="9" viewBox="0 0 9 9"><path d="M8.5 0 V8.5 H0 Z" fill="#a0a3a8"/></svg>
<svg class="a" style="left:90px;top:426px;" width="9" height="9" viewBox="0 0 9 9"><path d="M8.5 0 V8.5 H0 Z" fill="#a0a3a8"/></svg>
<svg class="a" style="left:0px;top:512px;" width="34" height="34" viewBox="0 0 34 34"><path d="M5 0 V32 M27 0 V32 M0 4.8 H32 M0 27 H32" stroke="#e2e2e4" stroke-width="2.2"/><clipPath id="hc1"><rect x="8" y="8" width="16.3" height="16.3"/></clipPath><g clip-path="url(#hc1)"><path d="M-6 25 L11 8" stroke="#84bcf0" stroke-width="1.8"/><path d="M-1 25 L16 8" stroke="#84bcf0" stroke-width="1.8"/><path d="M4 25 L21 8" stroke="#84bcf0" stroke-width="1.8"/><path d="M9 25 L26 8" stroke="#84bcf0" stroke-width="1.8"/><path d="M14 25 L31 8" stroke="#84bcf0" stroke-width="1.8"/></g></svg>
<svg class="a" style="left:60px;top:512px;" width="34" height="34" viewBox="0 0 34 34"><path d="M5 0 V32 M27 0 V32 M0 4.8 H32 M0 27 H32" stroke="#e2e2e4" stroke-width="2.2"/><rect x="11" y="2" width="11" height="3.5" rx="1.5" fill="#fff"/><clipPath id="hc2"><rect x="8" y="8" width="16.3" height="16.3"/></clipPath><g clip-path="url(#hc2)"><path d="M-6 25 L11 8" stroke="#84bcf0" stroke-width="1.8"/><path d="M-1 25 L16 8" stroke="#84bcf0" stroke-width="1.8"/><path d="M4 25 L21 8" stroke="#84bcf0" stroke-width="1.8"/><path d="M9 25 L26 8" stroke="#84bcf0" stroke-width="1.8"/><path d="M14 25 L31 8" stroke="#84bcf0" stroke-width="1.8"/></g></svg>
<svg class="a" style="left:90px;top:542px;" width="9" height="9" viewBox="0 0 9 9"><path d="M8.5 0 V8.5 H0 Z" fill="#a0a3a8"/></svg>
<svg class="a" style="left:120px;top:512px;" width="34" height="34" viewBox="0 0 34 34"><path d="M5 0 V32 M27 0 V32 M0 4.8 H32 M0 27 H32" stroke="#e2e2e4" stroke-width="2.2"/><defs><linearGradient id="gr1" x1="0" y1="0" x2="0" y2="1"><stop offset="0" stop-color="#8cc2f2"/><stop offset="1" stop-color="#3d4452"/></linearGradient></defs><rect x="7.7" y="7.7" width="16.5" height="16.5" fill="url(#gr1)"/></svg>
<svg class="a" style="left:0px;top:576px;" width="34" height="34" viewBox="0 0 34 34"><path d="M5 0 V32 M27 0 V32 M0 4.8 H32 M0 27 H32" stroke="#84bcf0" stroke-width="2.2"/></svg>
<svg class="a" style="left:60px;top:576px;" width="34" height="34" viewBox="0 0 34 34"><clipPath id="hc3"><path d="M0 0 H32 V32 H0 Z"/></clipPath><g clip-path="url(#hc3)"><path d="M-34 34 L0 0" stroke="#e2e2e4" stroke-width="2.4"/><path d="M-29 34 L5 0" stroke="#e2e2e4" stroke-width="2.4"/><path d="M-24 34 L10 0" stroke="#e2e2e4" stroke-width="2.4"/><path d="M-19 34 L15 0" stroke="#e2e2e4" stroke-width="2.4"/><path d="M-14 34 L20 0" stroke="#e2e2e4" stroke-width="2.4"/><path d="M-9 34 L25 0" stroke="#e2e2e4" stroke-width="2.4"/><path d="M-4 34 L30 0" stroke="#e2e2e4" stroke-width="2.4"/><path d="M1 34 L35 0" stroke="#e2e2e4" stroke-width="2.4"/><path d="M6 34 L40 0" stroke="#e2e2e4" stroke-width="2.4"/><path d="M11 34 L45 0" stroke="#e2e2e4" stroke-width="2.4"/><path d="M16 34 L50 0" stroke="#e2e2e4" stroke-width="2.4"/><path d="M21 34 L55 0" stroke="#e2e2e4" stroke-width="2.4"/><path d="M26 34 L60 0" stroke="#e2e2e4" stroke-width="2.4"/><path d="M31 34 L65 0" stroke="#e2e2e4" stroke-width="2.4"/><path d="M36 34 L70 0" stroke="#e2e2e4" stroke-width="2.4"/></g><path d="M6.3 7.8 H18.5 V13 H26 V24.5 H6.3 Z" fill="#84bcf0" stroke="#2b313c" stroke-width="2"/></svg>
<svg class="a" style="left:120px;top:578px;" width="34" height="30" viewBox="0 0 34 30"><path d="M0 0.5 H19 L32 12 V26.5 H0 Z" fill="#dcdcde"/><circle cx="15" cy="13.5" r="5" fill="#3b4453"/></svg>
<svg class="a" style="left:0px;top:690px;" width="34" height="34" viewBox="0 0 34 34"><g transform="translate(0,12) scale(1.0)"><rect x="2" y="1" width="17" height="14" fill="#6e727a" stroke="#e2e2e4" stroke-width="2.2"/><rect x="0" y="13" width="4" height="4" fill="#e2e2e4"/><circle cx="19" cy="15" r="6.3" fill="#6e727a" stroke="#e2e2e4" stroke-width="2.2"/><path d="M19 9 V15 H25" fill="none" stroke="#e2e2e4" stroke-width="1.6"/></g><path d="M23.5 1 L25 6 L30 4 L27.5 8.5 L32 11 L27 12 L28.5 17 L24 14 L21 18 L20.5 13 L15.5 12.5 L19.5 9 L16 5 L21 6 Z" fill="#f3d27a"/></svg>
<svg class="a" style="left:60px;top:690px;" width="34" height="34" viewBox="0 0 34 34"><path d="M14 2 H24 L32 9 V26 H14 Z" fill="#84bcf0"/><path d="M24 2 L32 9 H24 Z" fill="#cfe6fb" stroke="#2b313c" stroke-width="1"/><g transform="translate(1,12) scale(1.0)"><rect x="2" y="1" width="17" height="14" fill="#6e727a" stroke="#e2e2e4" stroke-width="2.2"/><rect x="0" y="13" width="4" height="4" fill="#e2e2e4"/><circle cx="19" cy="15" r="6.3" fill="#6e727a" stroke="#e2e2e4" stroke-width="2.2"/><path d="M19 9 V15 H25" fill="none" stroke="#e2e2e4" stroke-width="1.6"/></g></svg>
<svg class="a" style="left:120px;top:690px;" width="34" height="34" viewBox="0 0 34 34"><g transform="translate(2,10) scale(1.0)"><rect x="2" y="1" width="17" height="14" fill="#6e727a" stroke="#e2e2e4" stroke-width="2.2"/><rect x="0" y="13" width="4" height="4" fill="#e2e2e4"/><circle cx="19" cy="15" r="6.3" fill="#6e727a" stroke="#e2e2e4" stroke-width="2.2"/><path d="M19 9 V15 H25" fill="none" stroke="#e2e2e4" stroke-width="1.6"/></g><g transform="translate(15,17) rotate(-43.025065989118026)"><path d="M0 0 L6 -3.2 H17.518284528683193 V3.2 H6 Z" fill="#f0cf7a" stroke="#2b313c" stroke-width="0.9"/><path d="M0 0 L6 -3.2 V3.2 Z" fill="#d0d0d2"/><path d="M16.518284528683193 -3.2 H19.518284528683193 A3.2 3.2 0 0 1 19.518284528683193 3.2 H16.518284528683193 Z" fill="#e06a6a"/></g></svg>
<svg class="a" style="left:0px;top:756px;" width="34" height="34" viewBox="0 0 34 34"><g transform="translate(0,2) scale(1.0)"><path d="M0 0 H14 L30 16 L16 30 L0 14 Z" fill="#dcdcde"/><circle cx="6" cy="6" r="2.2" fill="#3b4453"/><path d="M9 14 L10 15 M12 17 L20 25 M16 12 L24 20" stroke="#6a6d73" stroke-width="1.8"/></g><g transform="translate(15,17) rotate(-40.91438322002513)"><path d="M0 0 L6 -3.2 H16.849433241279208 V3.2 H6 Z" fill="#f0cf7a" stroke="#2b313c" stroke-width="0.9"/><path d="M0 0 L6 -3.2 V3.2 Z" fill="#d0d0d2"/><path d="M15.849433241279208 -3.2 H18.849433241279208 A3.2 3.2 0 0 1 18.849433241279208 3.2 H15.849433241279208 Z" fill="#e06a6a"/></g></svg>
<svg class="a" style="left:30px;top:786px;" width="9" height="9" viewBox="0 0 9 9"><path d="M8.5 0 V8.5 H0 Z" fill="#a0a3a8"/></svg>
<svg class="a" style="left:60px;top:756px;" width="34" height="34" viewBox="0 0 34 34"><g transform="translate(1,1) scale(1.0)"><path d="M0 0 H14 L30 16 L16 30 L0 14 Z" fill="#dcdcde"/><circle cx="6" cy="6" r="2.2" fill="#3b4453"/><path d="M9 14 L10 15 M12 17 L20 25 M16 12 L24 20" stroke="#6a6d73" stroke-width="1.8"/></g></svg>
<svg class="a" style="left:120px;top:754px;" width="34" height="36" viewBox="0 0 34 36"><g transform="translate(1,15) scale(1.0)"><rect x="2" y="1" width="17" height="14" fill="#6e727a" stroke="#e2e2e4" stroke-width="2.2"/><rect x="0" y="13" width="4" height="4" fill="#e2e2e4"/><circle cx="19" cy="15" r="6.3" fill="#6e727a" stroke="#e2e2e4" stroke-width="2.2"/><path d="M19 9 V15 H25" fill="none" stroke="#e2e2e4" stroke-width="1.6"/></g><rect x="14" y="0.5" width="18" height="16" fill="#f2f2f4" stroke="#3b4453" stroke-width="1"/><rect x="14.5" y="1" width="17" height="3" fill="#9a9ca0"/><path d="M18 8 H19.5 M21 8 H29 M18 12 H19.5 M21 12 H29" stroke="#3b4453" stroke-width="1.8"/></svg>
<svg class="a" style="left:0px;top:819px;" width="34" height="34" viewBox="0 0 34 34"><g transform="translate(0,12) scale(1.0)"><rect x="2" y="1" width="17" height="14" fill="#6e727a" stroke="#e2e2e4" stroke-width="2.2"/><rect x="0" y="13" width="4" height="4" fill="#e2e2e4"/><circle cx="19" cy="15" r="6.3" fill="#6e727a" stroke="#e2e2e4" stroke-width="2.2"/><path d="M19 9 V15 H25" fill="none" stroke="#e2e2e4" stroke-width="1.6"/></g><path d="M16 1 H32 V17 H20 L16 13 Z" fill="#bdbec2"/><rect x="19.5" y="1" width="9" height="6" fill="#f0f0f2"/><rect x="19.5" y="11" width="9" height="6" fill="#f0f0f2"/></svg>
<svg class="a" style="left:60px;top:819px;" width="34" height="34" viewBox="0 0 34 34"><rect x="1.5" y="1.5" width="26" height="26" fill="#6e727a" stroke="#e2e2e4" stroke-width="2.2"/><rect x="20" y="24" width="14" height="4.6" fill="#3b4453"/><path d="M26 30 H20.5 M26 21 V32 M21 26.5 H32" stroke="#84bcf0" stroke-width="4"/></svg>
<svg class="a" style="left:120px;top:819px;" width="34" height="34" viewBox="0 0 34 34"><path d="M0 3 H14 L30 19 L16 33 L0 17 Z" fill="#dcdcde"/><circle cx="6" cy="9" r="2.2" fill="#3b4453"/><path d="M12 20 L20 28 M16 16 L24 24" stroke="#6a6d73" stroke-width="1.8"/><circle cx="24" cy="9" r="8" fill="#3b4453"/><path d="M17.5 7 A7 7 0 0 1 30 5 M30.5 11 A7 7 0 0 1 18 13" fill="none" stroke="#7ccb8c" stroke-width="2.2"/><path d="M27 2 L32 6 L27.5 8 Z M21 16 L16 12 L20.5 10 Z" fill="#7ccb8c"/></svg>
<svg class="a" style="left:0px;top:884px;" width="34" height="34" viewBox="0 0 34 34"><g transform="translate(0,2) scale(1.0)"><path d="M0 0 H14 L30 16 L16 30 L0 14 Z" fill="#dcdcde"/><circle cx="6" cy="6" r="2.2" fill="#3b4453"/><path d="M9 14 L10 15 M12 17 L20 25 M16 12 L24 20" stroke="#6a6d73" stroke-width="1.8"/></g><rect x="16" y="0" width="16" height="16" fill="#3b4453"/><path d="M20 1 H28 M20 15 H28 M17 4 V12 M31 4 V12" stroke="#84bcf0" stroke-width="2"/><rect x="19.5" y="4" width="9" height="8" fill="#5a96d0"/></svg>
<svg class="a" style="left:60px;top:884px;" width="34" height="34" viewBox="0 0 34 34"><g transform="translate(1,0) scale(0.8)"><rect x="2" y="1" width="17" height="14" fill="#6e727a" stroke="#e2e2e4" stroke-width="2.2"/><rect x="0" y="13" width="4" height="4" fill="#e2e2e4"/><circle cx="19" cy="15" r="6.3" fill="#6e727a" stroke="#e2e2e4" stroke-width="2.2"/><path d="M19 9 V15 H25" fill="none" stroke="#e2e2e4" stroke-width="1.6"/></g><path d="M23.5 3.5 H30.5 V12" fill="none" stroke="#f2f2f4" stroke-width="2"/><path d="M21 3.5 L25.5 0 V7 Z" fill="#f2f2f4"/><g transform="translate(8,16) scale(0.95)"><rect x="2" y="1" width="17" height="14" fill="#4f6c90" stroke="#84bcf0" stroke-width="2.2"/><rect x="0" y="13" width="4" height="4" fill="#84bcf0"/><circle cx="19" cy="15" r="6.3" fill="#4f6c90" stroke="#84bcf0" stroke-width="2.2"/><path d="M19 9 V15 H25" fill="none" stroke="#84bcf0" stroke-width="1.6"/></g></svg>
<svg class="a" style="left:0px;top:999px;" width="34" height="34" viewBox="0 0 34 34"><path d="M16.3 4 V28 M4 16.5 H28" stroke="#f4f4f6" stroke-width="2.4"/><path d="M16.3 2 L22 9.5 H10.6 Z M16.3 32 L22 24.5 H10.6 Z M1 16.5 L8.5 10.8 V22.2 Z M31.5 16.5 L24 10.8 V22.2 Z" fill="#f4f4f6"/></svg>
<svg class="a" style="left:58px;top:999px;" width="34" height="34" viewBox="0 0 34 34"><circle cx="9" cy="8.2" r="6.2" fill="none" stroke="#dcdcde" stroke-width="2"/><path d="M18 5 H27.4 V12" fill="none" stroke="#f2f2f4" stroke-width="2"/><path d="M23.5 11 H31.3 L27.4 16 Z" fill="#f2f2f4"/><circle cx="17" cy="26" r="6" fill="none" stroke="#84bcf0" stroke-width="2.2"/><path d="M25 20.5 A6 5.8 0 1 1 25 31.5" fill="none" stroke="#84bcf0" stroke-width="2.2"/></svg>
<svg class="a" style="left:118px;top:999px;" width="36" height="34" viewBox="0 0 36 34"><path d="M3.5 31 L16 4 V31 Z" fill="none" stroke="#dcdcde" stroke-width="2"/><path d="M20 4 V31 H32.6 Z" fill="none" stroke="#84bcf0" stroke-width="2"/></svg>
<svg class="a" style="left:0px;top:1062px;" width="34" height="34" viewBox="0 0 34 34"><path d="M27.5 20 A13 13 0 1 1 18 5" fill="none" stroke="#f4f4f6" stroke-width="2.2"/><path d="M16.7 0 L24 6 L16.7 12 Z" fill="#f4f4f6"/></svg>
<svg class="a" style="left:58px;top:1062px;" width="36" height="34" viewBox="0 0 36 34"><path d="M4 4.5 V22.5 H14 M4 4.5 H22 V12" fill="none" stroke="#dcdcde" stroke-width="2"/><rect x="2.2" y="2.7" width="3.6" height="3.6" fill="#f2f2f4"/><rect x="11.2" y="2.7" width="3.6" height="3.6" fill="#f2f2f4"/><rect x="20.2" y="2.7" width="3.6" height="3.6" fill="#f2f2f4"/><rect x="2.2" y="11.7" width="3.6" height="3.6" fill="#f2f2f4"/><rect x="11.2" y="11.7" width="3.6" height="3.6" fill="#f2f2f4"/><rect x="2.2" y="20.7" width="3.6" height="3.6" fill="#f2f2f4"/><rect x="11.2" y="20.7" width="3.6" height="3.6" fill="#f2f2f4"/><path d="M20 15 V31 L24.5 26.5 L33.5 27 Z" fill="#f4f4f6"/><path d="M31 10 V16 M28 13 H34" stroke="#f2f2f4" stroke-width="1.8"/></svg>
<svg class="a" style="left:118px;top:1062px;" width="36" height="36" viewBox="0 0 36 36"><path d="M2 5 H19 M26 5 H34" stroke="#84bcf0" stroke-width="1.8" stroke-dasharray="3.5 2"/><path d="M26 5 H34" stroke="#dcdcde" stroke-width="1.8"/><path d="M11 8 L20 21 M21 3 V21" stroke="#f4f4f6" stroke-width="3"/><ellipse cx="17.5" cy="28" rx="3" ry="4.5" fill="none" stroke="#f4f4f6" stroke-width="2"/><ellipse cx="26" cy="25.5" rx="3.5" ry="3.5" fill="none" stroke="#f4f4f6" stroke-width="2"/></svg>
<svg class="a" style="left:150px;top:1094px;" width="9" height="9" viewBox="0 0 9 9"><path d="M8.5 0 V8.5 H0 Z" fill="#a0a3a8"/></svg>
<svg class="a" style="left:0px;top:1126px;" width="34" height="36" viewBox="0 0 34 36"><path d="M1 20 C2 11 8 4 17.6 3" fill="none" stroke="#84bcf0" stroke-width="2.2"/><path d="M20 3 H32" stroke="#dcdcde" stroke-width="2.2"/><path d="M1 22 V34" stroke="#dcdcde" stroke-width="2.2"/></svg>
<svg class="a" style="left:30px;top:1157px;" width="9" height="9" viewBox="0 0 9 9"><path d="M8.5 0 V8.5 H0 Z" fill="#a0a3a8"/></svg>
<svg class="a" style="left:58px;top:1126px;" width="36" height="36" viewBox="0 0 36 36"><path d="M34 7 H10.7 A11.1 11.1 0 0 0 10.7 29.2 H34" fill="none" stroke="#84bcf0" stroke-width="2.2"/><path d="M34 13.3 H11.5 A4.8 4.8 0 0 0 11.5 22.9 H34" fill="none" stroke="#dcdcde" stroke-width="2.2"/></svg>
<svg class="a" style="left:120px;top:1128px;" width="34" height="32" viewBox="0 0 34 32"><rect x="2.3" y="2" width="11.7" height="11.8" fill="#dcdcde"/><rect x="18" y="2" width="12" height="11.8" fill="#84bcf0"/><rect x="2.3" y="18" width="11.7" height="11.7" fill="#84bcf0"/><rect x="18" y="18" width="12" height="11.7" fill="#84bcf0"/></svg>
<svg class="a" style="left:150px;top:1157px;" width="9" height="9" viewBox="0 0 9 9"><path d="M8.5 0 V8.5 H0 Z" fill="#a0a3a8"/></svg>
<svg class="a" style="left:0px;top:1190px;" width="34" height="34" viewBox="0 0 34 34"><path d="M4.5 9 L10 4 H30 V21 L25 27" fill="none" stroke="#84bcf0" stroke-width="2.2"/><path d="M4.5 9 H25 V27 M25 9 L30 4" fill="none" stroke="#84bcf0" stroke-width="2.2"/><rect x="5" y="11.8" width="17.5" height="16" fill="#3b4453" stroke="#dcdcde" stroke-width="2.2"/><rect x="0" y="11.8" width="2" height="16" fill="#84bcf0"/></svg>
<svg class="a" style="left:58px;top:1190px;" width="36" height="36" viewBox="0 0 36 36"><path d="M15.5 14 V3 H3.5 V33 H15.5 V24" fill="none" stroke="#dcdcde" stroke-width="2.2"/><path d="M18 3 H23 L32.5 33 H18" fill="none" stroke="#84bcf0" stroke-width="2.2"/><path d="M11 21 H18" stroke="#fff" stroke-width="2.2"/><path d="M17.5 16.5 L24 21 L17.5 25.5 Z" fill="#fff"/></svg>
<svg class="a" style="left:118px;top:1190px;" width="36" height="36" viewBox="0 0 36 36"><path d="M2 4 L5 2 H21.8 V16 L19 19 H2 Z" fill="#dcdcde"/><path d="M18.8 4 H2 V19 H18.8 Z" fill="#e6e6e8"/><path d="M18.8 4 L21.8 2 V16 L18.8 19 Z" fill="#bdbec2"/><rect x="20" y="19" width="14" height="14" fill="#84bcf0"/><path d="M4 23 V28 H12" fill="none" stroke="#fff" stroke-width="2"/><path d="M11.5 24.5 L15.5 28 L11.5 31.5 Z" fill="#fff"/></svg>
<svg class="a" style="left:0px;top:1254px;" width="34" height="36" viewBox="0 0 34 36"><path d="M0 2.3 H30.6 V32.5 H20" fill="none" stroke="#84bcf0" stroke-width="2.4"/><rect x="0" y="2" width="2" height="9" fill="#84bcf0"/><rect x="1" y="16.2" width="15.5" height="16.3" fill="none" stroke="#dcdcde" stroke-width="2.4"/></svg>
<svg class="a" style="left:58px;top:1254px;" width="36" height="36" viewBox="0 0 36 36"><path d="M3 33 L33.5 3" stroke="#dcdcde" stroke-width="2.2"/><path d="M11.5 12 L23.5 23.5" stroke="#3b4453" stroke-width="5"/><path d="M11.5 12 L23.5 23.5" stroke="#84bcf0" stroke-width="2.2"/></svg>
<svg class="a" style="left:90px;top:1286px;" width="9" height="9" viewBox="0 0 9 9"><path d="M8.5 0 V8.5 H0 Z" fill="#a0a3a8"/></svg>
<svg class="a" style="left:118px;top:1262px;" width="36" height="20" viewBox="0 0 36 20"><path d="M2 9.8 H34" stroke="#dcdcde" stroke-width="2.2"/><path d="M10 4.5 L18 9.8 L10 15 Z M28 4.5 L20 9.8 L28 15 Z" fill="#84bcf0"/></svg>
<svg class="a" style="left:0px;top:1318px;" width="34" height="36" viewBox="0 0 34 36"><rect x="0" y="2.8" width="20" height="15.5" fill="#bdbec2"/><rect x="13.5" y="15" width="17.5" height="16" fill="#3b4453" stroke="#dcdcde" stroke-width="2.2"/><path d="M16.5 22 L21 29 H17 Z" fill="#c8c8ca"/><path d="M22 4 H29 V9" fill="none" stroke="#fff" stroke-width="1.8"/><path d="M26 9 H32 L29 13 Z" fill="#fff"/><path d="M9.5 33 H3 V28" fill="none" stroke="#fff" stroke-width="1.8"/><path d="M0 28 H6 L3 24 Z" fill="#fff"/></svg>
<svg class="a" style="left:58px;top:1318px;" width="36" height="36" viewBox="0 0 36 36"><rect x="3" y="2" width="16.5" height="13" fill="#6e727a" stroke="#dcdcde" stroke-width="2"/><rect x="1" y="12" width="4" height="4" fill="#dcdcde"/><circle cx="19.5" cy="15" r="6" fill="#6e727a" stroke="#dcdcde" stroke-width="2"/><path d="M19.5 9 V15 H25.5" fill="none" stroke="#dcdcde" stroke-width="1.5"/><path d="M6 22.5 V29 H14" fill="none" stroke="#fff" stroke-width="2"/><path d="M13.5 25 L18 29 L13.5 33 Z" fill="#fff"/><circle cx="28" cy="29.5" r="5" fill="none" stroke="#84bcf0" stroke-width="2"/></svg>
<svg class="a" style="left:124px;top:1318px;" width="24" height="36" viewBox="0 0 24 36"><path d="M12 2 V20" stroke="#c9ad80" stroke-width="2"/><path d="M10 17 H14 L16 22 H8 Z" fill="#c9ad80"/><path d="M8 24.5 H16 L21 34 H3 Z" fill="#f0cf7a"/></svg>
<svg class="a" style="left:0px;top:1434px;" width="36" height="36" viewBox="0 0 36 36"><path d="M5.5 32.0 L16.0 4.5 L26.5 32.0 M9.7 21.55 H22.3" fill="none" stroke="#dcdcde" stroke-width="3" stroke-linejoin="miter"/></svg>
<svg class="a" style="left:58px;top:1432px;" width="36" height="36" viewBox="0 0 36 36"><path d="M3.5 27.5 L12.25 4.5 L21.0 27.5 M7.0 18.759999999999998 H17.5" fill="none" stroke="#dcdcde" stroke-width="2.8" stroke-linejoin="miter"/><path d="M25 18 L32 10.5" stroke="#f2f2f4" stroke-width="3.5"/><path d="M16.5 31.5 C18 27 21 23 25 21.5 L26.5 23.5 C25 28 21 31 16.5 31.5 Z" fill="#d7b57e"/></svg>
<svg class="a" style="left:118px;top:1432px;" width="36" height="38" viewBox="0 0 36 38"><path d="M7.5 32 L18.0 4 L28.5 32 M11.7 21.36 H24.3" fill="none" stroke="#dcdcde" stroke-width="2.6" stroke-linejoin="miter"/><rect x="2" y="34" width="32" height="2" fill="#84bcf0"/></svg>
<svg class="a" style="left:0px;top:1498px;" width="36" height="36" viewBox="0 0 36 36"><path d="M0 2 H22 V17 L16 25.5 H0 Z" fill="#dcdcde"/><path d="M4 6.5 H18 M4 10.3 H18 M4 14 H18" stroke="#6a6d73" stroke-width="1.6"/><path d="M24.5 4.5 H29 V13" fill="none" stroke="#fff" stroke-width="1.8"/><path d="M26 12 H32 L29 16 Z" fill="#fff"/><path d="M14.5 34 L23 16.5 L31.5 34 M17.5 28 H28.5" fill="none" stroke="#fff" stroke-width="2.2"/></svg>
<svg class="a" style="left:58px;top:1498px;" width="36" height="36" viewBox="0 0 36 36"><text x="3" y="14.2" font-family="Liberation Sans" font-weight="bold" font-size="13" fill="#dcdcde" letter-spacing="0.6">ABC</text><path d="M9.5 24 L15 30 L26.5 18.5" fill="none" stroke="#6cc883" stroke-width="3.6"/></svg>
<svg class="a" style="left:118px;top:1498px;" width="36" height="36" viewBox="0 0 36 36"><circle cx="15" cy="13.5" r="12.2" fill="none" stroke="#f4f4f6" stroke-width="2"/><path d="M9 19.5 L15.0 7 L21 19.5 M11.4 14.75 H18.6" fill="none" stroke="#dcdcde" stroke-width="1.8" stroke-linejoin="miter"/><path d="M23.5 22.5 L32.5 31.5" stroke="#d7b57e" stroke-width="3"/></svg>
<svg class="a" style="left:16px;top:1573px;" width="24" height="23" viewBox="0 0 24 23"><path d="M12 0 V23 M0 11.5 H23" stroke="#dcdcde" stroke-width="1.8"/></svg>
<svg class="a" style="left:73px;top:1574px;" width="28" height="22" viewBox="0 0 28 22"><path d="M5 1.5 H28 M0 8 H28 M5 14.5 H28 M0 21 H28" stroke="#dcdcde" stroke-width="2"/><rect x="0" y="12" width="19" height="5" fill="#dcdcde"/><path d="M22 13 L26 17 H18 Z" fill="#dcdcde"/></svg>
<svg class="a" style="left:198px;top:169px;" width="14" height="13" viewBox="0 0 14 13"><path d="M6.5 0 V12.5 M0 6.2 H13" stroke="#a3a6ab" stroke-width="1.6"/></svg>
<div class="a" style="left:235px;top:158px;width:2.5px;height:26px;background:#a3a6ab;"></div>
<div class="t" style="left:249.3px;top:161.1px;font-size:23.48px;color:#a3a6ab;font-weight:bold;">Custom View</div>
<div class="a" style="left:411px;top:158px;width:2.5px;height:26px;background:#a3a6ab;"></div>
<div class="t" style="left:426.3px;top:161.1px;font-size:23.48px;color:#a3a6ab;font-weight:bold;transform:scaleX(0.9703);transform-origin:0 0;">Realistic</div>
<svg class="a" style="left:166px;top:149px;" width="2254" height="1409" viewBox="0 0 2254 1409"><g transform="translate(-166,-149)" fill="none" stroke="#f2f2f2" stroke-width="1.3"><ellipse cx="1306.85" cy="959.2" rx="407.5" ry="174"/><ellipse cx="1306.6" cy="959" rx="81.6" ry="34.9"/><path d="M938.2 885.2 L1577.7 352.2"/><path d="M938.2 885.2 L1576.9 1088.9"/></g></svg>
<svg class="a" style="left:1290px;top:835px;" width="130" height="160" viewBox="0 0 130 160"><g transform="translate(-1290,-835)"><defs><linearGradient id="zb" x1="0" x2="1"><stop offset="0" stop-color="#3f5e9e"/><stop offset="0.6" stop-color="#6f90d0"/><stop offset="1" stop-color="#4a68a8"/></linearGradient><linearGradient id="yg" x1="0" y1="0" x2="0" y2="1"><stop offset="0" stop-color="#5a9a48"/><stop offset="1" stop-color="#3e7a34"/></linearGradient><linearGradient id="xr" x1="0" y1="0" x2="0" y2="1"><stop offset="0" stop-color="#e8a098"/><stop offset="0.5" stop-color="#c8796f"/><stop offset="1" stop-color="#9a5048"/></linearGradient></defs><path d="M1302.8 840 H1327.3 L1302.8 865 H1327.3" fill="none" stroke="#3f6fe0" stroke-width="1.3"/><path d="M1351 891 L1363 903 L1375 891 M1363 903 V915" fill="none" stroke="#5cc04a" stroke-width="1.2"/><path d="M1384 949 L1408 972 M1408 949 L1384 972" fill="none" stroke="#c84848" stroke-width="1.2"/><path d="M1313 952 L1357 924" stroke="url(#yg)" stroke-width="11" stroke-linecap="round"/><rect x="1300.8" y="872" width="11.9" height="88" fill="url(#zb)"/><path d="M1300.8 873 L1306.8 867.5 L1312.7 873 Z" fill="#7a9ad8"/><path d="M1305 959 L1389 981" stroke="url(#xr)" stroke-width="10.5" stroke-linecap="round"/><path d="M1388 976 L1393.5 981.5 L1387.5 986.5 Z" fill="#d89088"/></g></svg>
<svg class="a" style="left:1755px;top:1070px;" width="150" height="150" viewBox="0 0 150 150"><g transform="translate(-1755,-1070)"><path d="M1805.5 1074 V1163 M1805.5 1175.5 V1218" stroke="#7474d8" stroke-width="1.4"/><path d="M1760 1160.3 L1799.3 1170.5 M1811.8 1173.2 L1897.8 1191.5" stroke="#d88080" stroke-width="1.4"/><path d="M1780.3 1187.5 L1799.5 1174.5 M1811.5 1165.5 L1859.8 1132.4" stroke="#b0e0a0" stroke-width="1.4"/><rect x="1799.8" y="1163.5" width="11.5" height="11.5" fill="none" stroke="#fff" stroke-width="1.6"/></g></svg>
<svg class="a" style="left:2100px;top:220px;" width="320" height="220" viewBox="0 0 320 220"><g transform="translate(-2100,-220)"><defs><radialGradient id="glow" cx="0.5" cy="0.5" r="0.5"><stop offset="0" stop-color="#5a5f68"/><stop offset="0.55" stop-color="#2e333b"/><stop offset="1" stop-color="#1e232b"/></radialGradient><linearGradient id="ff" x1="0" y1="0" x2="0" y2="1"><stop offset="0" stop-color="#bcbfc3"/><stop offset="1" stop-color="#a9acb0"/></linearGradient></defs><ellipse cx="2260" cy="375.6" rx="130" ry="60.5" fill="#4a4f58"/><ellipse cx="2259.4" cy="376" rx="97" ry="38.5" fill="#1f242c"/><ellipse cx="2252" cy="372" rx="70" ry="30" fill="url(#glow)" opacity="0.8"/><polygon points="2191.8,275.2 2243.0,246.0 2325.2,262.2 2278.7,293.6" fill="#b9bcc0" stroke="#8e9196" stroke-width="0.8"/><polygon points="2191.8,275.2 2278.7,293.6 2278.7,385.5 2195.4,361.7" fill="url(#ff)" stroke="#8e9196" stroke-width="0.8"/><polygon points="2278.7,293.6 2325.2,262.2 2320.9,349.8 2278.7,385.5" fill="#abaeb2" stroke="#8e9196" stroke-width="0.8"/><polygon points="2262,289 2274,284 2287,287 2287,303 2279,308 2262,304" fill="#c6c9ce" opacity="0.85"/><g transform="matrix(0.8690,0.1840,0.0360,0.8650,2191.80,275.20)"><text x="16" y="65" font-family="Liberation Sans" font-weight="bold" font-size="31" fill="#5b5f66" textLength="69" lengthAdjust="spacingAndGlyphs">FRONT</text></g><g transform="matrix(0.4650,-0.3140,0.0000,0.9190,2278.70,293.60)"><text x="18" y="58" font-family="Liberation Sans" font-weight="bold" font-size="29" fill="#5b5f66" textLength="68" lengthAdjust="spacingAndGlyphs">RIGHT</text></g><g transform="matrix(0.8220,0.1620,-0.5120,0.2920,2243.00,246.00)"><text x="24" y="42" font-family="Liberation Sans" font-weight="bold" font-size="26" fill="#5b5f66" textLength="40" lengthAdjust="spacingAndGlyphs" font-style="italic">TOP</text></g><text transform="translate(2149,339) rotate(-20) skewX(-35)" font-family="Liberation Sans" font-weight="bold" font-size="15" fill="#a7aab0" textLength="42" lengthAdjust="spacingAndGlyphs">W</text><text transform="translate(2168,430) rotate(12) skewX(-30)" font-family="Liberation Sans" font-weight="bold" font-size="30" fill="#a7aab0" textLength="36" lengthAdjust="spacingAndGlyphs">S</text><text transform="translate(2349,408) rotate(-12) skewX(-32)" font-family="Liberation Sans" font-weight="bold" font-size="24" fill="#a7aab0" textLength="38" lengthAdjust="spacingAndGlyphs">E</text></g></svg>
<div class="a" style="left:2212px;top:487px;width:99px;height:24px;background:#5b6370;border-radius:9px"></div>
<div class="t" style="left:2220.4px;top:489.4px;font-size:20.43px;color:#20252c;-webkit-text-stroke:0.35px #20252c;transform:scaleX(0.9900);transform-origin:0 0;">WCS</div>
<svg class="a" style="left:2283px;top:492px;" width="16" height="12" viewBox="0 0 16 12"><path d="M1 1.5 H14 L7.5 10 Z" fill="#22272e"/><path d="M3.5 2.8 H11.5 L7.5 8 Z" fill="#8aa0b4"/></svg>
<div class="a" style="left:874px;top:1456px;width:920px;height:52px;background:#3b4453;"></div>
<div class="a" style="left:874px;top:1467px;width:900px;height:9px;overflow:hidden">
<div class="t" style="left:10px;top:-14.5px;font-size:21.74px;color:#dcdee2;transform:scaleX(0.9851);transform-origin:0 0">Specify next point or [Undo]:</div>
</div>
<div class="t" style="left:884.8px;top:1481.3px;font-size:22.03px;color:#dcdee2;-webkit-text-stroke:0.35px #dcdee2;transform:scaleX(0.9023);transform-origin:0 0;">Command:</div>
<div class="a" style="left:1775px;top:1468px;width:8px;height:36px;background:#9a9ea6;border-radius:4px"></div>
<div class="a" style="left:794px;top:1508px;width:1000px;height:50px;background:#3b4453;"></div>
<div class="a" style="left:794px;top:1557px;width:1000px;height:1px;background:#2a303a;"></div>
<svg class="a" style="left:811px;top:1522px;" width="46" height="24" viewBox="0 0 46 24"><path d="M1 2 L9 7 L1 12" fill="none" stroke="#dcdcde" stroke-width="1.8"/><path d="M12 21 H25" stroke="#dcdcde" stroke-width="1.8"/><path d="M31 8 H42 L36.5 14 Z" fill="#dcdcde"/></svg>
<div class="t" style="left:884.8px;top:1519.8px;font-size:26.09px;color:#8f949b;-webkit-text-stroke:0.35px #8f949b;font-style:italic;transform:scaleX(0.8678);transform-origin:0 0;">Type a command</div>
<svg class="a" style="left:1712px;top:1529px;" width="13" height="9" viewBox="0 0 13 9"><path d="M0 0 H12 L6 8 Z" fill="#8f949b"/></svg>
<svg class="a" style="left:1748px;top:1520px;" width="28" height="26" viewBox="0 0 28 26"><path d="M1 9 H5 M20 9 H26 V25 H1 V9" fill="none" stroke="#dcdcde" stroke-width="1.8"/><path d="M13 24 V4" stroke="#84bcf0" stroke-width="2"/><path d="M8.5 6 L13 0.5 L17.5 6 Z" fill="#84bcf0"/></svg>
<div class="a" style="left:168px;top:1560px;width:117px;height:44px;background:#4b556a;"></div>
<div class="a" style="left:285px;top:1560px;width:3px;height:44px;background:#232932;"></div>
<div class="a" style="left:331px;top:1560px;width:3px;height:44px;background:#232932;"></div>
<div class="a" style="left:450px;top:1560px;width:2px;height:44px;background:#232932;"></div>
<div class="a" style="left:568px;top:1560px;width:2px;height:44px;background:#232932;"></div>
<div class="a" style="left:166px;top:1558px;width:2px;height:46px;background:#232932;"></div>
<div class="t" style="left:192.4px;top:1567.8px;font-size:23.62px;color:#f2f2f4;font-weight:bold;transform:scaleX(0.9160);transform-origin:0 0;">Model</div>
<svg class="a" style="left:299px;top:1570px;" width="22" height="23" viewBox="0 0 22 23"><path d="M11 0 V23 M0 11.5 H22" stroke="#dcdcde" stroke-width="1.8"/></svg>
<div class="t" style="left:377.0px;top:1567.8px;font-size:23.62px;color:#a8acb2;-webkit-text-stroke:0.35px #a8acb2;transform:scaleX(0.8652);transform-origin:0 0;">A3</div>
<div class="t" style="left:468.0px;top:1567.8px;font-size:23.62px;color:#a8acb2;-webkit-text-stroke:0.35px #a8acb2;transform:scaleX(0.9470);transform-origin:0 0;">Layout2</div>
<div class="a" style="left:1916px;top:1560px;width:2px;height:44px;background:#232932;"></div>
<div class="t" style="left:1932.6px;top:1570.3px;font-size:22.17px;color:#b9bcc2;-webkit-text-stroke:0.35px #b9bcc2;transform:scaleX(1.0643);transform-origin:0 0;">8.338,   -2.120 , 0.000</div>
<svg class="a" style="left:2176px;top:1566px;" width="32" height="32" viewBox="0 0 32 32"><path d="M7.6 1 V31 M16 1 V31 M24 1 V31 M1 8.3 H31 M1 15.7 H31 M1 23.8 H31" stroke="#dcdcde" stroke-width="2"/></svg>
<svg class="a" style="left:2222px;top:1569px;" width="28" height="26" viewBox="0 0 28 26"><rect x="1.5999999999999996" y="0.5999999999999996" width="4.4" height="4.4" fill="#dcdcde"/><rect x="1.5999999999999996" y="10.5" width="4.4" height="4.4" fill="#dcdcde"/><rect x="1.5999999999999996" y="20.7" width="4.4" height="4.4" fill="#dcdcde"/><rect x="11.8" y="0.5999999999999996" width="4.4" height="4.4" fill="#dcdcde"/><rect x="11.8" y="10.5" width="4.4" height="4.4" fill="#dcdcde"/><rect x="11.8" y="20.7" width="4.4" height="4.4" fill="#dcdcde"/><rect x="21.8" y="0.5999999999999996" width="4.4" height="4.4" fill="#dcdcde"/><rect x="21.8" y="10.5" width="4.4" height="4.4" fill="#dcdcde"/><rect x="21.8" y="20.7" width="4.4" height="4.4" fill="#dcdcde"/></svg>
<svg class="a" style="left:2264px;top:1565px;" width="34" height="34" viewBox="0 0 34 34"><path d="M1.5 1 V32 H32" fill="none" stroke="#dcdcde" stroke-width="2"/><rect x="1.5" y="23.5" width="8.5" height="8.5" fill="none" stroke="#dcdcde" stroke-width="2"/></svg>
<div class="a" style="left:2304px;top:1562px;width:40px;height:40px;background:#6289c0;"></div>
<svg class="a" style="left:2304px;top:1562px;" width="40" height="40" viewBox="0 0 40 40"><circle cx="16.2" cy="21.6" r="12.3" fill="none" stroke="#fff" stroke-width="2"/><path d="M16.2 21.6 L31.8 6.7 M16.2 21.6 H36" fill="none" stroke="#fff" stroke-width="2"/></svg>
<svg class="a" style="left:2351px;top:1569px;" width="34" height="28" viewBox="0 0 34 28"><path d="M8 0 V15 M0.5 7.7 H15" stroke="#dcdcde" stroke-width="2"/><rect x="12.7" y="17" width="20.5" height="8" fill="#dcdcde"/><rect x="15" y="18.8" width="2" height="4.4" fill="#3b4453"/></svg>
<svg class="a" style="left:2396px;top:1567px;" width="33" height="30" viewBox="0 0 33 30"><rect x="0" y="2" width="32" height="2.2" fill="#dcdcde"/><rect x="20" y="0" width="0" height="0"/><rect x="0" y="2" width="16" height="4" fill="#dcdcde"/><rect x="0" y="11" width="32" height="2.2" fill="#dcdcde"/><rect x="0" y="10" width="16" height="5" fill="#dcdcde"/><rect x="0" y="21" width="32" height="2.2" fill="#dcdcde"/><rect x="0" y="19" width="16" height="8" fill="#dcdcde"/></svg>
<div class="a" style="left:2436px;top:1562px;width:40px;height:40px;background:#6289c0;"></div>
<svg class="a" style="left:2436px;top:1562px;" width="40" height="40" viewBox="0 0 40 40"><rect x="6.3" y="6.3" width="27" height="27" fill="none" stroke="#fff" stroke-width="2.4"/><rect x="9.5" y="9.5" width="4.2" height="4.2" fill="#fff"/><rect x="9.5" y="17.9" width="4.2" height="4.2" fill="#fff"/><rect x="9.5" y="26.3" width="4.2" height="4.2" fill="#fff"/><rect x="13.7" y="13.7" width="4.2" height="4.2" fill="#fff"/><rect x="13.7" y="22.1" width="4.2" height="4.2" fill="#fff"/><rect x="17.9" y="9.5" width="4.2" height="4.2" fill="#fff"/><rect x="17.9" y="17.9" width="4.2" height="4.2" fill="#fff"/><rect x="17.9" y="26.3" width="4.2" height="4.2" fill="#fff"/><rect x="22.1" y="13.7" width="4.2" height="4.2" fill="#fff"/><rect x="22.1" y="22.1" width="4.2" height="4.2" fill="#fff"/><rect x="26.3" y="9.5" width="4.2" height="4.2" fill="#fff"/><rect x="26.3" y="17.9" width="4.2" height="4.2" fill="#fff"/><rect x="26.3" y="26.3" width="4.2" height="4.2" fill="#fff"/></svg>
<div class="a" style="left:2480px;top:1562px;width:40px;height:40px;background:#6289c0;"></div>
<svg class="a" style="left:2480px;top:1562px;" width="40" height="40" viewBox="0 0 40 40"><path d="M10 5 H6 V33 H10 M24 5 H28 V22" fill="none" stroke="#fff" stroke-width="2"/><rect x="12" y="9" width="10" height="7" fill="#a8bcd8" stroke="#fff" stroke-width="1.2"/><circle cx="17" cy="22.5" r="4" fill="#a8bcd8" stroke="#fff" stroke-width="1.2"/><path d="M21 22 V37 L25 33 L31 35 Z" fill="#fff"/></svg>
<div class="a" style="left:2524px;top:1562px;width:40px;height:40px;background:#6289c0;"></div>
<svg class="a" style="left:2524px;top:1562px;" width="40" height="40" viewBox="0 0 40 40"><path d="M4 34 L28 11 M4 34 H36" fill="none" stroke="#fff" stroke-width="2.4"/><circle cx="17" cy="21.5" r="2.5" fill="#fff"/></svg>
<div class="a" style="left:2568px;top:1562px;width:40px;height:40px;background:#6289c0;"></div>
<svg class="a" style="left:2568px;top:1562px;" width="40" height="40" viewBox="0 0 40 40"><rect x="5" y="5" width="8.5" height="8.5" fill="none" stroke="#fff" stroke-width="2"/><path d="M9.2 14 V33.5 H34 V10 H14" fill="none" stroke="#fff" stroke-width="2.4"/></svg>
<div class="a" style="left:2612px;top:1562px;width:40px;height:40px;background:#6289c0;"></div>
<svg class="a" style="left:2612px;top:1562px;" width="40" height="40" viewBox="0 0 40 40"><path d="M16 5 L27 36 L19 28.5 H13 L5 36 Z" fill="#fff"/><circle cx="29" cy="12" r="6.3" fill="#fff"/></svg>
<svg class="a" style="left:2659px;top:1565px;" width="36" height="34" viewBox="0 0 36 34"><path d="M14 3 L25 33 L17 26 H11.5 L3 33 Z" fill="#dcdcde"/><path d="M24 1 L20 10 H24 L21.5 17 L28 7 H24.5 L27 1 Z" fill="#f0c040"/></svg>
<svg class="a" style="left:2706px;top:1565px;" width="30" height="34" viewBox="0 0 30 34"><path d="M13.5 3 L24.5 33 L16.5 26 H11 L2.5 33 Z" fill="#dcdcde"/></svg>
<div class="t" style="left:2740.6px;top:1570.4px;font-size:22.75px;color:#bfc1c5;-webkit-text-stroke:0.35px #bfc1c5;transform:scaleX(0.7841);transform-origin:0 0;">1:1</div>
<svg class="a" style="left:2773px;top:1578px;" width="14" height="9" viewBox="0 0 14 9"><path d="M0 0 H12.5 L6.2 7.5 Z" fill="#dcdcde"/></svg>
<svg class="a" style="left:2803px;top:1566px;" width="34" height="32" viewBox="0 0 34 32"><rect x="1.5" y="1.5" width="12" height="12" fill="none" stroke="#dcdcde" stroke-width="2"/><circle cx="25.5" cy="14" r="6.5" fill="none" stroke="#dcdcde" stroke-width="2"/><path d="M6.5 30 L12.3 19.5 L18 30 Z" fill="none" stroke="#dcdcde" stroke-width="2"/></svg>
<svg class="a" style="left:2848px;top:1566px;" width="32" height="32" viewBox="0 0 32 32"><g transform="translate(15.5,15.5)"><circle r="10.5" fill="#dcdcde"/><rect x="-3.3" y="-15.3" width="6.6" height="7" fill="#dcdcde" transform="rotate(0)"/><rect x="-3.3" y="-15.3" width="6.6" height="7" fill="#dcdcde" transform="rotate(45)"/><rect x="-3.3" y="-15.3" width="6.6" height="7" fill="#dcdcde" transform="rotate(90)"/><rect x="-3.3" y="-15.3" width="6.6" height="7" fill="#dcdcde" transform="rotate(135)"/><rect x="-3.3" y="-15.3" width="6.6" height="7" fill="#dcdcde" transform="rotate(180)"/><rect x="-3.3" y="-15.3" width="6.6" height="7" fill="#dcdcde" transform="rotate(225)"/><rect x="-3.3" y="-15.3" width="6.6" height="7" fill="#dcdcde" transform="rotate(270)"/><rect x="-3.3" y="-15.3" width="6.6" height="7" fill="#dcdcde" transform="rotate(315)"/><circle r="4.8" fill="#3b4453"/></g></svg>
<div class="t" style="left:2443.0px;top:154.3px;font-size:23.19px;color:#ececee;-webkit-text-stroke:0.35px #ececee;transform:scaleX(1.0346);transform-origin:0 0;">Layers</div>
<svg class="a" style="left:2850px;top:150px;" width="24" height="29" viewBox="0 0 24 29"><path d="M9 7 V2 H22 V27 H9 V22" fill="none" stroke="#dcdcde" stroke-width="2"/><path d="M16 14.5 H3" stroke="#dcdcde" stroke-width="2"/><path d="M0.5 14.5 L6 9.5 V19.5 Z" fill="#dcdcde"/></svg>
<svg class="a" style="left:2449px;top:213px;" width="36" height="36" viewBox="0 0 36 36"><path d="M10 21 H32 L23 26 H1 Z" fill="#dcdcde"/><path d="M10 27 H32 L23 32 H1 Z" fill="#dcdcde"/><path d="M12 9 H32 L21 21 H1 Z" fill="#84bcf0"/><circle cx="16.7" cy="9" r="6.8" fill="#dcdcde" stroke="#3b4453" stroke-width="1.4"/></svg>
<svg class="a" style="left:2497px;top:213px;" width="36" height="36" viewBox="0 0 36 36"><path d="M9 2 H25 L16 11 H0 Z" fill="#dcdcde"/><path d="M9 12 H25 L16 17 H0 Z" fill="#dcdcde"/><path d="M9 18 H25 L16 23 H0 Z" fill="#dcdcde"/><path d="M17 25 L24 18 L31 25 L24 32 Z" fill="#f0cf7a" stroke="#3b4453" stroke-width="1.2"/><path d="M24 18 L28 14 L33 19 L30 22 Z" fill="#f2f2f4" stroke="#3b4453" stroke-width="1.2"/></svg>
<svg class="a" style="left:2546px;top:213px;" width="36" height="36" viewBox="0 0 36 36"><path d="M12 10 H28 L19 16 H3 Z" fill="#dcdcde"/><path d="M12 17 H28 L19 22 H3 Z" fill="#dcdcde"/><path d="M12 23 H28 L19 28 H3 Z" fill="#dcdcde"/><path d="M9 9 C15 8 20 8 21 14" fill="none" stroke="#84bcf0" stroke-width="3.6"/><path d="M1 6.5 L9 1.5 V12 Z" fill="#84bcf0"/></svg>
<svg class="a" style="left:2595px;top:213px;" width="36" height="36" viewBox="0 0 36 36"><path d="M10 3 H26 L17 9 H1 Z" fill="#dcdcde"/><path d="M10 10 H26 L17 15 H1 Z" fill="#dcdcde"/><path d="M10 16.5 H26 L17 21.5 H1 Z" fill="#84bcf0"/><path d="M27 21 L19 29" stroke="#fff" stroke-width="2.2"/><path d="M15 32 L17.5 24 L23.5 30 Z" fill="#fff"/></svg>
<svg class="a" style="left:2643px;top:213px;" width="36" height="36" viewBox="0 0 36 36"><path d="M10 3 H26 L17 9 H1 Z" fill="#dcdcde"/><path d="M10 10 H26 L17 15 H1 Z" fill="#dcdcde"/><path d="M10 16.5 H26 L17 21.5 H1 Z" fill="#84bcf0"/><path d="M16 32 L24 24" stroke="#fff" stroke-width="2.2"/><path d="M28 20.5 L26 28.5 L20 22.5 Z" fill="#fff"/></svg>
<svg class="a" style="left:2690px;top:215px;" width="36" height="36" viewBox="0 0 36 36"><path d="M12 2 H28 L16 12 H0 Z" fill="#dcdcde"/><g transform="translate(22.5,21.3)" stroke="#7fd0e0" stroke-width="2"><path d="M0 -8 V8" transform="rotate(0)"/><path d="M-2.5 -6 L0 -4 L2.5 -6" fill="none" transform="rotate(0)"/><path d="M-2.5 6 L0 4 L2.5 6" fill="none" transform="rotate(0)"/><path d="M0 -8 V8" transform="rotate(60)"/><path d="M-2.5 -6 L0 -4 L2.5 -6" fill="none" transform="rotate(60)"/><path d="M-2.5 6 L0 4 L2.5 6" fill="none" transform="rotate(60)"/><path d="M0 -8 V8" transform="rotate(120)"/><path d="M-2.5 -6 L0 -4 L2.5 -6" fill="none" transform="rotate(120)"/><path d="M-2.5 6 L0 4 L2.5 6" fill="none" transform="rotate(120)"/></g></svg>
<svg class="a" style="left:2738px;top:215px;" width="36" height="36" viewBox="0 0 36 36"><path d="M12 2 H28 L16 12 H0 Z" fill="#dcdcde"/><circle cx="24" cy="17.5" r="6" fill="#7fd0e0"/><path d="M20.5 22 H27.5 V26 A3.5 3.5 0 0 1 20.5 26 Z" fill="#f4f4f6"/></svg>
<svg class="a" style="left:2786px;top:215px;" width="36" height="36" viewBox="0 0 36 36"><path d="M12 2 H28 L16 12 H0 Z" fill="#dcdcde"/><path d="M20.5 19 V15 A5 5 0 0 1 30.5 15 V19" fill="none" stroke="#7fd0e0" stroke-width="2.4"/><rect x="17.5" y="18.5" width="13" height="11.5" fill="#7fd0e0"/><rect x="23.3" y="21.5" width="1.6" height="4.5" fill="#3b4453"/></svg>
<svg class="a" style="left:2834px;top:215px;" width="36" height="36" viewBox="0 0 36 36"><path d="M12 2 H28 L16 12 H0 Z" fill="#dcdcde"/><path d="M22 18 V13 A4.5 4.5 0 0 1 31 13 V18" fill="none" stroke="#f0cf7a" stroke-width="2.4"/><rect x="13.5" y="18.5" width="13" height="11.5" fill="#f0cf7a"/><rect x="19.2" y="21.5" width="1.6" height="4.5" fill="#3b4453"/></svg>
<div class="a" style="left:2441px;top:270px;width:437px;height:50px;background:#4f586b;border:1.5px solid #2b313c;border-radius:4px"></div>
<svg class="a" style="left:2460px;top:286px;" width="140" height="20" viewBox="0 0 140 20"><circle cx="9.8" cy="9" r="8" fill="#dcdcde"/><path d="M40 9 V5.5 A4.5 4.5 0 0 1 49 5.5 V9" fill="none" stroke="#6a707c" stroke-width="2"/><rect x="37.5" y="9" width="14" height="10" fill="#6a707c"/><g transform="translate(78,9)" stroke="#6a707c" stroke-width="1.8"><path d="M0 -8 V8" transform="rotate(0)"/><path d="M0 -8 V8" transform="rotate(60)"/><path d="M0 -8 V8" transform="rotate(120)"/><circle r="3.5" fill="none"/></g><rect x="102.5" y="1.5" width="17" height="16" fill="#fff" stroke="#000" stroke-width="2"/></svg>
<div class="t" style="left:2605.0px;top:283.5px;font-size:21.74px;color:#f2f2f4;-webkit-text-stroke:0.35px #f2f2f4;transform:scaleX(0.9513);transform-origin:0 0;">0</div>
<svg class="a" style="left:2857px;top:290px;" width="14" height="9" viewBox="0 0 14 9"><path d="M0 0 H13 L6.5 8 Z" fill="#dcdcde"/></svg>
<div class="a" style="left:2444px;top:326px;width:432px;height:51px;background:#4f586b;border:1.5px solid #2b313c;border-radius:4px"></div>
<div class="t" style="left:2456.4px;top:339.5px;font-size:21.74px;color:#f2f2f4;-webkit-text-stroke:0.35px #f2f2f4;transform:scaleX(1.0571);transform-origin:0 0;">Unsaved Layer State</div>
<svg class="a" style="left:2856px;top:345px;" width="13" height="9" viewBox="0 0 13 9"><path d="M0 0 H12 L6 8 Z" fill="#dcdcde"/></svg>
<svg class="a" style="left:2449px;top:397px;" width="18" height="13" viewBox="0 0 18 13"><path d="M1.5 1.5 L9 10 L16.5 1.5" fill="none" stroke="#c4c6ca" stroke-width="2.2"/></svg>
<div class="t" style="left:2491.0px;top:391.3px;font-size:23.19px;color:#c8cacd;-webkit-text-stroke:0.35px #c8cacd;">Hide Layer List</div>
<div class="a" style="left:2443px;top:433px;width:429px;height:422px;background:#3b4453;border:1.5px solid #2b313c"></div>
<div class="a" style="left:2444.5px;top:434.5px;width:426px;height:47px;background:#2e3440;"></div>
<div class="a" style="left:2508px;top:435px;width:114px;height:46px;background:#4b5468;"></div>
<div class="a" style="left:2667px;top:437px;width:1.5px;height:44px;background:#3a404c;"></div>
<div class="a" style="left:2711px;top:437px;width:1.5px;height:44px;background:#3a404c;"></div>
<div class="a" style="left:2804px;top:437px;width:1.5px;height:44px;background:#3a404c;"></div>
<div class="a" style="left:2444.5px;top:482px;width:426px;height:340px;background:#4f586b;"></div>
<div class="a" style="left:2444.5px;top:482px;width:426px;height:38px;background:#939eb0;"></div>
<div class="a" style="left:2444.5px;top:822px;width:426px;height:1.5px;background:#2b313c;"></div>
<svg class="a" style="left:2462px;top:447px;" width="26" height="22" viewBox="0 0 26 22"><path d="M1 11 C6 3 20 3 25 11 C20 19 6 19 1 11 Z" fill="#dcdcde"/><circle cx="13" cy="11" r="5.5" fill="#2b313c"/><circle cx="13" cy="11" r="3" fill="#dcdcde"/></svg>
<svg class="a" style="left:2515px;top:447px;" width="20" height="20" viewBox="0 0 20 20"><rect x="1.5" y="1.5" width="16" height="16" fill="none" stroke="#c8cacd" stroke-width="2"/><path d="M2 17 L17 2 V17 Z" fill="#c8cacd"/></svg>
<div class="t" style="left:2547.0px;top:447.2px;font-size:22.17px;color:#dcdcde;font-weight:bold;transform:scaleX(1.0292);transform-origin:0 0;">N...</div>
<svg class="a" style="left:2597px;top:450px;" width="14" height="18" viewBox="0 0 14 18"><path d="M1 6.5 L6.5 0.5 L12 6.5 Z M1 11 L6.5 17 L12 11 Z" fill="#c8cacd"/></svg>
<svg class="a" style="left:2557px;top:472px;" width="14" height="9" viewBox="0 0 14 9"><path d="M0 8.5 L6.5 0.5 L13 8.5 Z" fill="#3b8de8"/></svg>
<svg class="a" style="left:2634px;top:448px;" width="22" height="20" viewBox="0 0 22 20"><g transform="translate(10,9.5)" stroke="#c8cacd" stroke-width="2"><path d="M0 -9 V9" transform="rotate(0)"/><path d="M-2.5 -7 L0 -5 L2.5 -7" fill="none" transform="rotate(0)"/><path d="M-2.5 7 L0 5 L2.5 7" fill="none" transform="rotate(0)"/><path d="M0 -9 V9" transform="rotate(60)"/><path d="M-2.5 -7 L0 -5 L2.5 -7" fill="none" transform="rotate(60)"/><path d="M-2.5 7 L0 5 L2.5 7" fill="none" transform="rotate(60)"/><path d="M0 -9 V9" transform="rotate(120)"/><path d="M-2.5 -7 L0 -5 L2.5 -7" fill="none" transform="rotate(120)"/><path d="M-2.5 7 L0 5 L2.5 7" fill="none" transform="rotate(120)"/></g></svg>
<svg class="a" style="left:2680px;top:448px;" width="17" height="22" viewBox="0 0 17 22"><path d="M3.5 9 V6 A5 5 0 0 1 13.5 6 V9" fill="none" stroke="#dcdcde" stroke-width="2.4"/><rect x="0.5" y="9" width="16" height="11.5" fill="#dcdcde"/><rect x="7.5" y="12" width="2" height="5.5" fill="#2b313c"/></svg>
<svg class="a" style="left:2746px;top:450px;" width="20" height="16" viewBox="0 0 20 16"><path d="M0 1.5 H19 M0 7.5 H19" stroke="#dcdcde" stroke-width="2.2"/><rect x="0" y="11.5" width="19" height="3.5" fill="#dcdcde"/></svg>
<svg class="a" style="left:2840px;top:450px;" width="22" height="16" viewBox="0 0 22 16"><path d="M1 1.5 H3 M5 1.5 H7 M9 1.5 H11 M13 1.5 H15 M17 1.5 H19 M1 7.5 H6 M9 7.5 H14 M17 7.5 H19 M1 13.5 H19" stroke="#dcdcde" stroke-width="2"/></svg>
<svg class="a" style="left:2469px;top:491px;" width="70" height="22" viewBox="0 0 70 22"><circle cx="11" cy="10" r="8" fill="#dcdcde"/><rect x="38" y="1.5" width="16.5" height="16.5" fill="#fff" stroke="#000" stroke-width="2"/></svg>
<div class="t" style="left:2542.7px;top:490.0px;font-size:21.45px;color:#f4f4f6;-webkit-text-stroke:0.35px #f4f4f6;transform:scaleX(1.0228);transform-origin:0 0;">0</div>
<div class="t" style="left:2725.0px;top:490.0px;font-size:21.45px;color:#f4f4f6;-webkit-text-stroke:0.35px #f4f4f6;transform:scaleX(0.9670);transform-origin:0 0;">De...</div>
<div class="a" style="left:2820px;top:500px;width:50px;height:2px;background:#f4f4f6;"></div>
<svg class="a" style="left:2469px;top:529px;" width="70" height="22" viewBox="0 0 70 22"><circle cx="11" cy="10" r="8" fill="#dcdcde"/><rect x="38" y="1.5" width="16.5" height="16.5" fill="#e8412a" stroke="#000" stroke-width="2"/></svg>
<div class="t" style="left:2542.7px;top:528.0px;font-size:21.45px;color:#f4f4f6;-webkit-text-stroke:0.35px #f4f4f6;">Layer1</div>
<div class="t" style="left:2725.0px;top:528.0px;font-size:21.45px;color:#f4f4f6;-webkit-text-stroke:0.35px #f4f4f6;transform:scaleX(0.9670);transform-origin:0 0;">De...</div>
<div class="a" style="left:2820px;top:538px;width:50px;height:2px;background:#f4f4f6;"></div>
<div class="a" style="left:2450px;top:836px;width:351px;height:10px;background:#8a909a;border-radius:5px"></div>
<svg class="a" style="left:2458px;top:866px;" width="30" height="30" viewBox="0 0 30 30"><path d="M5 10 L11 3 H28 L22 10 Z" fill="none" stroke="#c8cacd" stroke-width="1.8"/><path d="M3 17 L9 10 M22 10 L18 17 H3 M1 24 L7 17 M18 17 L14 24 H1" fill="none" stroke="#c8cacd" stroke-width="1.8"/></svg>
<svg class="a" style="left:2517px;top:865px;" width="34" height="34" viewBox="0 0 34 34"><path d="M4 10 L10 3 H25 L19 10 Z" fill="none" stroke="#c8cacd" stroke-width="1.8"/><path d="M2 16 L8 10 M1 22 L7 16 M2 16 H14" fill="none" stroke="#c8cacd" stroke-width="1.8"/><rect x="12.5" y="15.5" width="18" height="16" fill="#f2f2f4" stroke="#3b4453" stroke-width="1"/><rect x="13" y="16" width="17" height="3" fill="#9a9ca0"/><path d="M16 22.5 H18 M20 22.5 H27 M16 27 H18 M20 27 H27" stroke="#3b4453" stroke-width="1.6"/></svg>
<svg class="a" style="left:2578px;top:867px;" width="30" height="28" viewBox="0 0 30 28"><path d="M1 2 H10 L12.5 5 H23 V8 H7 L1 21 Z" fill="#dcdcde"/><path d="M7 9.5 H28 L23 22 H2 Z" fill="#dcdcde"/></svg>
<svg class="a" style="left:2638px;top:867px;" width="30" height="28" viewBox="0 0 30 28"><path d="M1 2 H10 L12.5 5 H23 V8 H7 L1 21 Z" fill="#dcdcde"/><path d="M7 9.5 H28 L23 22 H2 Z" fill="#dcdcde"/><path d="M16 11 L12 17 H15.5 L13 21 L19 14.5 H15.5 L18 11 Z" fill="#3b4453"/></svg>
<div class="a" style="left:2776px;top:879px;width:17px;height:5px;background:#8a8e96;"></div>
<svg class="a" style="left:2825px;top:869px;" width="40" height="24" viewBox="0 0 40 24"><rect x="1.5" y="2" width="19" height="17" fill="none" stroke="#dcdcde" stroke-width="2.2"/><path d="M8 2 V19 M14 2 V19" stroke="#dcdcde" stroke-width="2.2"/><path d="M27 8 H36 L31.5 13 Z" fill="#dcdcde"/></svg>
<div class="a" style="left:2444px;top:906px;width:428px;height:40px;background:#ffffff;border-radius:20px"></div>
<svg class="a" style="left:2453px;top:915px;" width="36" height="26" viewBox="0 0 36 26"><circle cx="9" cy="9" r="7.5" fill="none" stroke="#1a1a1a" stroke-width="2"/><path d="M14.5 14.5 L21 21" stroke="#1a1a1a" stroke-width="2.4"/><path d="M24 8 L28 12 L32 8" fill="none" stroke="#1a1a1a" stroke-width="1.8"/></svg>
<div class="t" style="left:2499.6px;top:915.1px;font-size:24.64px;color:#c2c2c4;-webkit-text-stroke:0.35px #c2c2c4;transform:scaleX(1.0759);transform-origin:0 0;">Search for layer</div>
<div class="a" style="left:2422px;top:963px;width:471px;height:2px;background:#2b313c;"></div>
<div class="t" style="left:2443.0px;top:969.0px;font-size:25.07px;color:#ececee;-webkit-text-stroke:0.35px #ececee;">Properties</div>
<div class="a" style="left:2663px;top:968px;width:118px;height:27px;background:#2b313c;border-radius:3px"></div>
<div class="a" style="left:2719.5px;top:969.5px;width:60px;height:24px;background:#4f586b;border-radius:0 2px 2px 0"></div>
<div class="t" style="left:2682.5px;top:973.3px;font-size:16.96px;color:#a0a3a8;-webkit-text-stroke:0.35px #a0a3a8;transform:scaleX(0.9657);transform-origin:0 0;">All</div>
<div class="t" style="left:2740.6px;top:973.3px;font-size:16.96px;color:#f2f2f4;-webkit-text-stroke:0.35px #f2f2f4;transform:scaleX(0.9910);transform-origin:0 0;">My</div>
<svg class="a" style="left:2801px;top:967px;" width="32" height="30" viewBox="0 0 32 30"><path d="M1 1 H19 V11 M19 21 V28 H1 Z" fill="none" stroke="#dcdcde" stroke-width="2"/><path d="M5 7 H15 M5 12 H15 M5 17 H12 M5 22 H9" stroke="#dcdcde" stroke-width="1.6"/><path d="M11 27 L25 13 L30 18 L16 32 L10 33 Z" fill="#dcdcde" stroke="#3b4453" stroke-width="1.2"/></svg>
<svg class="a" style="left:2850px;top:967px;" width="26" height="30" viewBox="0 0 26 30"><path d="M9 7 V1.5 H23 V28 H9 V22" fill="none" stroke="#dcdcde" stroke-width="2"/><path d="M16 14.5 H3" stroke="#dcdcde" stroke-width="2"/><path d="M0.5 14.5 L6 9.5 V19.5 Z" fill="#dcdcde"/></svg>
<div class="a" style="left:2444px;top:1014px;width:428px;height:40px;background:#434b5a;border:1px solid #3a4250;border-radius:4px"></div>
<div class="t" style="left:2456.0px;top:1022.3px;font-size:23.19px;color:#8e939a;-webkit-text-stroke:0.35px #8e939a;">Model Space</div>
<svg class="a" style="left:2853px;top:1029px;" width="12" height="9" viewBox="0 0 12 9"><path d="M0 0 H11 L5.5 8 Z" fill="#8e939a"/></svg>
<div class="a" style="left:2422px;top:1060px;width:440px;height:482px;overflow:hidden">
<div class="t" style="left:144.5px;top:14.8px;font-size:23.19px;color:#dcdde0;-webkit-text-stroke:0.35px #dcdde0;transform:scaleX(0.9926);transform-origin:0 0;">Color</div>
<div class="a" style="left:221.5px;top:10px;width:205px;height:34px;background:#4f586b;border:1.5px solid #2b313c;border-radius:3px"></div>
<svg class="a" style="left:406px;top:23px;" width="13" height="9" viewBox="0 0 13 9"><path d="M0 0 H12 L6 8 Z" fill="#dcdcde"/></svg>
<div class="t" style="left:278.4px;top:14.8px;font-size:23.19px;color:#f4f4f6;-webkit-text-stroke:0.35px #f4f4f6;transform:scaleX(0.9675);transform-origin:0 0;">ByLayer</div>
<svg class="a" style="left:238px;top:18px;" width="19" height="19" viewBox="0 0 19 19"><rect x="1" y="1" width="16.5" height="16.5" fill="#fff" stroke="#000" stroke-width="2"/></svg>
<div class="t" style="left:144.5px;top:60.8px;font-size:23.19px;color:#dcdde0;-webkit-text-stroke:0.35px #dcdde0;transform:scaleX(0.9690);transform-origin:0 0;">Layer</div>
<div class="a" style="left:221.5px;top:56px;width:205px;height:34px;background:#4f586b;border:1.5px solid #2b313c;border-radius:3px"></div>
<svg class="a" style="left:406px;top:69px;" width="13" height="9" viewBox="0 0 13 9"><path d="M0 0 H12 L6 8 Z" fill="#dcdcde"/></svg>
<div class="t" style="left:233.7px;top:60.8px;font-size:23.19px;color:#f4f4f6;-webkit-text-stroke:0.35px #f4f4f6;transform:scaleX(0.8375);transform-origin:0 0;">0</div>
<div class="t" style="left:110.0px;top:106.8px;font-size:23.19px;color:#dcdde0;-webkit-text-stroke:0.35px #dcdde0;transform:scaleX(1.0210);transform-origin:0 0;">Linetype</div>
<div class="a" style="left:221.5px;top:102px;width:205px;height:34px;background:#4f586b;border:1.5px solid #2b313c;border-radius:3px"></div>
<svg class="a" style="left:406px;top:115px;" width="13" height="9" viewBox="0 0 13 9"><path d="M0 0 H12 L6 8 Z" fill="#dcdcde"/></svg>
<div class="t" style="left:329.0px;top:106.8px;font-size:23.19px;color:#f4f4f6;-webkit-text-stroke:0.35px #f4f4f6;transform:scaleX(0.9144);transform-origin:0 0;">ByLa...</div>
<div class="a" style="left:235px;top:118px;width:65px;height:2px;background:#f4f4f6;"></div>
<div class="t" style="left:66.0px;top:152.8px;font-size:23.19px;color:#dcdde0;-webkit-text-stroke:0.35px #dcdde0;">Linetype sc...</div>
<div class="a" style="left:221.5px;top:148px;width:205px;height:34px;background:#4f586b;border:1.5px solid #2b313c;border-radius:3px"></div>
<div class="t" style="left:229.0px;top:152.8px;font-size:23.19px;color:#f4f4f6;-webkit-text-stroke:0.35px #f4f4f6;transform:scaleX(0.9428);transform-origin:0 0;">1.000</div>
<div class="t" style="left:88.0px;top:198.8px;font-size:23.19px;color:#dcdde0;-webkit-text-stroke:0.35px #dcdde0;transform:scaleX(1.0166);transform-origin:0 0;">Lineweight</div>
<div class="a" style="left:221.5px;top:194px;width:205px;height:34px;background:#4f586b;border:1.5px solid #2b313c;border-radius:3px"></div>
<svg class="a" style="left:406px;top:207px;" width="13" height="9" viewBox="0 0 13 9"><path d="M0 0 H12 L6 8 Z" fill="#dcdcde"/></svg>
<div class="t" style="left:234.4px;top:198.8px;font-size:23.19px;color:#f4f4f6;-webkit-text-stroke:0.35px #f4f4f6;transform:scaleX(0.9675);transform-origin:0 0;">ByLayer</div>
<div class="t" style="left:67.0px;top:244.8px;font-size:23.19px;color:#dcdde0;-webkit-text-stroke:0.35px #dcdde0;transform:scaleX(0.9936);transform-origin:0 0;">Transparency</div>
<div class="a" style="left:226px;top:240px;width:116px;height:34px;background:#4f586b;border:1.5px solid #2b313c;border-radius:3px"></div>
<div class="a" style="left:227px;top:246px;width:2px;height:22px;background:#4a8ee0;"></div>
<div class="a" style="left:282px;top:259px;width:1.2px;height:10px;background:#9aa0aa;"></div>
<div class="t" style="left:325.0px;top:244.8px;font-size:23.19px;color:#f2f2f4;-webkit-text-stroke:0.35px #f2f2f4;transform:scaleX(0.8530);transform-origin:0 0;">0</div>
<div class="a" style="left:352px;top:240px;width:75px;height:34px;background:#4f586b;border:1.5px solid #2b313c;border-radius:3px"></div>
<svg class="a" style="left:365px;top:244px;" width="27" height="27" viewBox="0 0 27 27"><rect x="1" y="1" width="25" height="25" fill="none" stroke="#dcdcde" stroke-width="2"/><rect x="4" y="4" width="4" height="4" fill="#dcdcde"/><rect x="4" y="12" width="4" height="4" fill="#dcdcde"/><rect x="4" y="20" width="4" height="4" fill="#dcdcde"/><rect x="8" y="8" width="4" height="4" fill="#dcdcde"/><rect x="8" y="16" width="4" height="4" fill="#dcdcde"/><rect x="12" y="4" width="4" height="4" fill="#dcdcde"/><rect x="12" y="12" width="4" height="4" fill="#dcdcde"/><rect x="12" y="20" width="4" height="4" fill="#dcdcde"/><rect x="16" y="8" width="4" height="4" fill="#dcdcde"/><rect x="16" y="16" width="4" height="4" fill="#dcdcde"/><rect x="20" y="4" width="4" height="4" fill="#dcdcde"/><rect x="20" y="12" width="4" height="4" fill="#dcdcde"/><rect x="20" y="20" width="4" height="4" fill="#dcdcde"/></svg>
<svg class="a" style="left:406px;top:253px;" width="13" height="9" viewBox="0 0 13 9"><path d="M0 0 H12 L6 8 Z" fill="#dcdcde"/></svg>
<div class="t" style="left:101.0px;top:290.8px;font-size:23.19px;color:#dcdde0;-webkit-text-stroke:0.35px #dcdde0;transform:scaleX(1.0192);transform-origin:0 0;">Text style</div>
<div class="a" style="left:221.5px;top:286px;width:205px;height:34px;background:#4f586b;border:1.5px solid #2b313c;border-radius:3px"></div>
<svg class="a" style="left:406px;top:299px;" width="13" height="9" viewBox="0 0 13 9"><path d="M0 0 H12 L6 8 Z" fill="#dcdcde"/></svg>
<div class="t" style="left:234.4px;top:290.8px;font-size:23.19px;color:#f4f4f6;-webkit-text-stroke:0.35px #f4f4f6;transform:scaleX(0.9701);transform-origin:0 0;">rd</div>
<div class="t" style="left:66.5px;top:336.8px;font-size:23.19px;color:#dcdde0;-webkit-text-stroke:0.35px #dcdde0;transform:scaleX(0.9768);transform-origin:0 0;">Dimension s...</div>
<div class="a" style="left:221.5px;top:332px;width:205px;height:34px;background:#4f586b;border:1.5px solid #2b313c;border-radius:3px"></div>
<svg class="a" style="left:406px;top:345px;" width="13" height="9" viewBox="0 0 13 9"><path d="M0 0 H12 L6 8 Z" fill="#dcdcde"/></svg>
<div class="t" style="left:234.6px;top:336.8px;font-size:23.19px;color:#f4f4f6;-webkit-text-stroke:0.35px #f4f4f6;transform:scaleX(0.9556);transform-origin:0 0;">rd</div>
<div class="t" style="left:66.5px;top:382.8px;font-size:23.19px;color:#dcdde0;-webkit-text-stroke:0.35px #dcdde0;transform:scaleX(1.0117);transform-origin:0 0;">Multileader...</div>
<div class="a" style="left:221.5px;top:378px;width:205px;height:34px;background:#4f586b;border:1.5px solid #2b313c;border-radius:3px"></div>
<svg class="a" style="left:406px;top:391px;" width="13" height="9" viewBox="0 0 13 9"><path d="M0 0 H12 L6 8 Z" fill="#dcdcde"/></svg>
<div class="t" style="left:234.6px;top:382.8px;font-size:23.19px;color:#f4f4f6;-webkit-text-stroke:0.35px #f4f4f6;transform:scaleX(0.9925);transform-origin:0 0;">Standard</div>
<div class="t" style="left:89.0px;top:428.8px;font-size:23.19px;color:#dcdde0;-webkit-text-stroke:0.35px #dcdde0;transform:scaleX(1.0087);transform-origin:0 0;">Table style</div>
<div class="a" style="left:221.5px;top:424px;width:205px;height:34px;background:#4f586b;border:1.5px solid #2b313c;border-radius:3px"></div>
<svg class="a" style="left:406px;top:437px;" width="13" height="9" viewBox="0 0 13 9"><path d="M0 0 H12 L6 8 Z" fill="#dcdcde"/></svg>
<div class="t" style="left:234.6px;top:428.8px;font-size:23.19px;color:#f4f4f6;-webkit-text-stroke:0.35px #f4f4f6;transform:scaleX(0.9925);transform-origin:0 0;">Standard</div>
<div class="t" style="left:69.0px;top:474.8px;font-size:23.19px;color:#dcdde0;-webkit-text-stroke:0.35px #dcdde0;transform:scaleX(0.9377);transform-origin:0 0;">Annotation s...</div>
<div class="a" style="left:221.5px;top:470px;width:205px;height:34px;background:#4f586b;border:1.5px solid #2b313c;border-radius:3px"></div>
<svg class="a" style="left:406px;top:483px;" width="13" height="9" viewBox="0 0 13 9"><path d="M0 0 H12 L6 8 Z" fill="#dcdcde"/></svg>
<div class="t" style="left:234.6px;top:474.8px;font-size:23.19px;color:#f4f4f6;-webkit-text-stroke:0.35px #f4f4f6;transform:scaleX(0.7260);transform-origin:0 0;">1:1</div>
</div>
<div class="a" style="left:2864.5px;top:1068px;width:9px;height:304px;background:#8a909a;border-radius:4.5px"></div>
</div></body></html>
